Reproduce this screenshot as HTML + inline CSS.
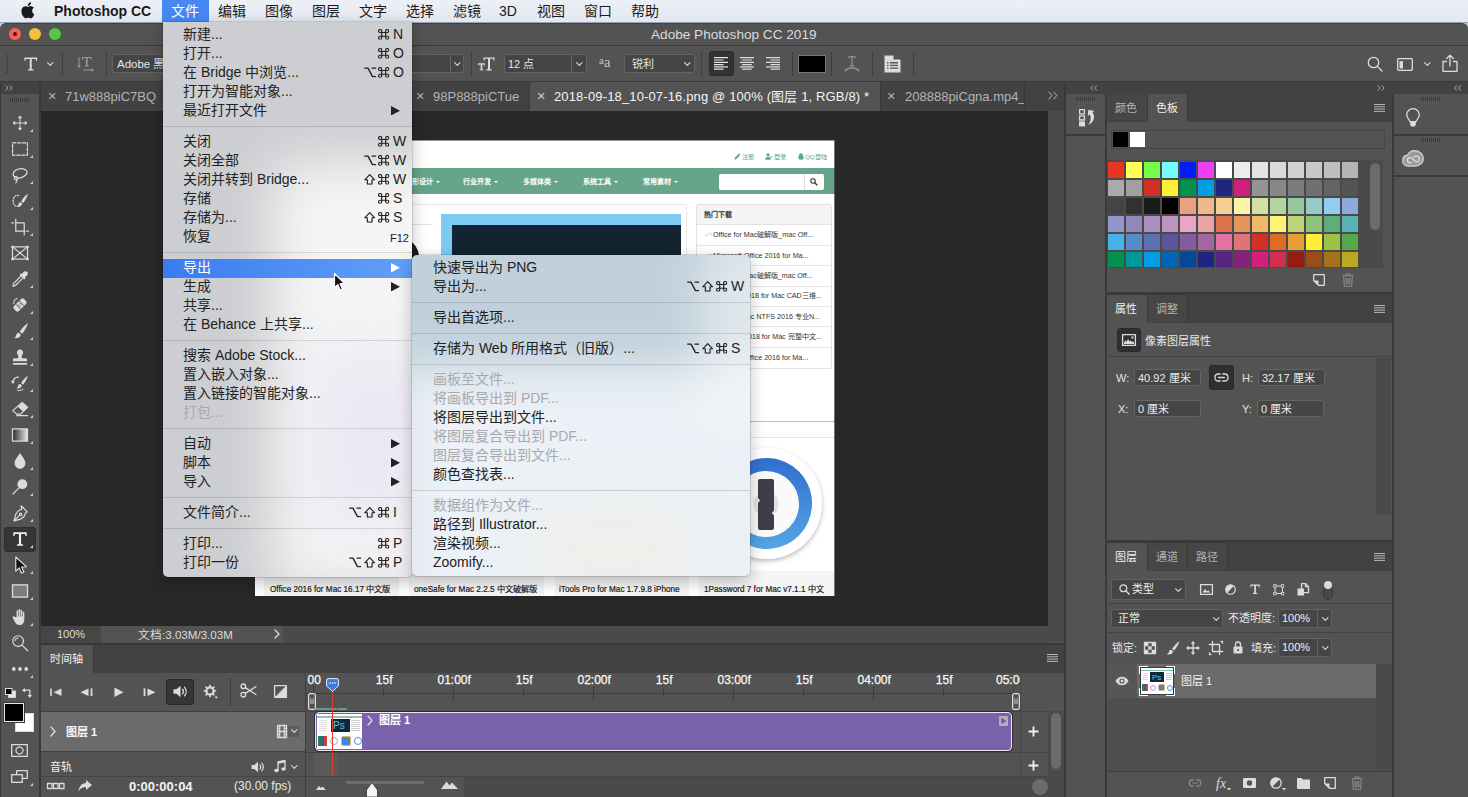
<!DOCTYPE html>
<html lang="zh-CN">
<head>
<meta charset="utf-8">
<title>Adobe Photoshop CC 2019</title>
<style>
*{box-sizing:border-box;margin:0;padding:0}
html,body{width:1468px;height:797px;overflow:hidden;background:#535353}
body{font-family:"Liberation Sans",sans-serif;font-size:12px;color:#ddd;position:relative}
.a{position:absolute}
.t{position:absolute;white-space:nowrap;line-height:1}
svg{position:absolute;overflow:visible}
.sep{position:absolute;width:1px;background:#3f3f3f}
.hl{position:absolute;height:1px;background:#3f3f3f}
.fld{position:absolute;background:#454545;border:1px solid #646464;border-radius:3px}
.dk{position:absolute;background:#333;border:1px solid #2a2a2a;border-radius:3px}
.pt{position:absolute;white-space:nowrap;line-height:1;font-size:11px;color:#b4b4b4}
.pt.on{color:#f0f0f0}
.ico{fill:none;stroke:#dcdcdc;stroke-width:1.3;stroke-linecap:round;stroke-linejoin:round}
.icf{fill:#dcdcdc;stroke:none}
/* mac menubar */
#menubar{left:0;top:0;width:1468px;height:22px;background:linear-gradient(#edf0f6,#e3e8f0);color:#1a1a1a}
#menubar .t{top:4px;font-size:14px}
/* mac menus */
.menu{position:absolute;color:#222;font-size:14px;box-shadow:0 5px 16px rgba(0,0,0,.26),0 0 0 .5px rgba(0,0,0,.22)}
.menu .mi{position:absolute;left:0;right:0;height:19px}
.menu .mi .t{top:2px;font-size:14px}
.menu .dis{color:#a9a9ad}
.menu .ms{position:absolute;left:0;right:0;height:1px;background:rgba(0,0,0,.13)}
.menu .sc{position:absolute;right:8px;top:0;height:19px}
</style>
</head>
<body>
<!-- shared icon symbols -->
<svg width="0" height="0" style="left:-10px;top:-10px">
 <defs>
  <symbol id="k-cmd" viewBox="0 0 12 12" preserveAspectRatio="none"><path d="M3.900 3.900V2.250a1.650 1.650 0 1 0-1.650 1.650H3.900zM8.100 3.900V2.250a1.650 1.650 0 1 1 1.650 1.650H8.100zM8.100 8.100V9.750a1.650 1.650 0 1 0 1.650-1.650H8.100zM3.900 8.100V9.750a1.650 1.650 0 1 1-1.650-1.650H3.900zM3.900 3.900H8.100V8.100H3.900z" fill="none" stroke="currentColor" stroke-width="1.250"/></symbol>
  <symbol id="k-opt" viewBox="0 0 12 12" preserveAspectRatio="none"><path d="M.2 1.300h3.700l4.300 9.400h3.600M7.300 1.300h4.500" fill="none" stroke="currentColor" stroke-width="1.350"/></symbol>
  <symbol id="k-shift" viewBox="0 0 12 12" preserveAspectRatio="none"><path d="M6 .8L.8 6.400h2.700v4.800h5V6.400h2.700z" fill="none" stroke="currentColor" stroke-width="1.250" stroke-linejoin="round"/></symbol>
  <symbol id="k-sub" viewBox="0 0 9 10" preserveAspectRatio="none"><path d="M0 0l9 5-9 5z" fill="currentColor"/></symbol>
 </defs>
</svg>
<!-- ================= macOS menu bar ================= -->
<div id="menubar" class="a">
  <svg style="left:21px;top:2px" width="14" height="17" viewBox="0 0 14 17"><path d="M11.600 9c0-2 1.700-3 1.800-3.100-1-1.400-2.500-1.600-3-1.600-1.300-.1-2.500.8-3.100.8-.700 0-1.700-.8-2.700-.7C3.200 4.400 1.900 5.200 1.200 6.400-.300 9 .800 12.800 2.200 14.900c.700 1 1.500 2.100 2.600 2.100 1.100 0 1.500-.700 2.700-.700 1.300 0 1.600.7 2.700.7 1.100 0 1.800-1 2.500-2 .8-1.200 1.100-2.300 1.100-2.400-.100 0-2.200-.8-2.200-3.600zM9.600 2.900c.6-.7 1-1.700.9-2.700-.9 0-1.900.6-2.500 1.300-.6.600-1.100 1.600-.9 2.600.9.100 1.900-.5 2.500-1.200z" fill="#1a1a1a" transform="scale(.96)"/></svg>
  <div class="t" style="left:54px;font-weight:bold">Photoshop CC</div>
  <div class="a" style="left:162px;top:0;width:47px;height:22px;background:#4689f2"></div>
  <div class="t" style="left:171px;color:#fff">文件</div>
  <div class="t" style="left:218px">编辑</div>
  <div class="t" style="left:265px">图像</div>
  <div class="t" style="left:312px">图层</div>
  <div class="t" style="left:359px">文字</div>
  <div class="t" style="left:406px">选择</div>
  <div class="t" style="left:453px">滤镜</div>
  <div class="t" style="left:499px">3D</div>
  <div class="t" style="left:537px">视图</div>
  <div class="t" style="left:584px">窗口</div>
  <div class="t" style="left:631px">帮助</div>
</div>
<!-- ================= Photoshop window chrome ================= -->
<div class="a" style="left:0;top:22px;width:1468px;height:9px;background:linear-gradient(#98a1b3 0 1px,#c5cddb 1px)"></div>
<div id="titlebar" class="a" style="left:0;top:23px;width:1468px;height:23px;background:#535353;border-radius:6px 6px 0 0;border-top:1px solid #3e4043"></div>
<div class="a" style="left:9px;top:28px;width:12px;height:12px;border-radius:50%;background:#f7615b"></div>
<div class="a" style="left:13px;top:32px;width:4px;height:4px;border-radius:50%;background:#4d0a08"></div>
<div class="a" style="left:29px;top:28px;width:12px;height:12px;border-radius:50%;background:#f8be3f"></div>
<div class="a" style="left:49px;top:28px;width:12px;height:12px;border-radius:50%;background:#54c748"></div>
<div class="t" style="left:651px;top:28px;font-size:13.600px;color:#dcdcdc">Adobe Photoshop CC 2019</div>
<div class="hl" style="left:0;top:45px;width:1468px;background:#3a3a3a"></div>

<!-- options bar (y 46-81) -->
<div id="optbar" class="a" style="left:0;top:46px;width:1468px;height:35px;background:#535353"></div>
<div class="a" style="left:6px;top:54px;width:2px;height:20px;background:repeating-linear-gradient(#3c3c3c 0 1px,transparent 1px 2px)"></div>
<!-- T tool icon -->
<svg style="left:23.500px;top:56.500px" width="13.500" height="14" viewBox="0 0 15 15" preserveAspectRatio="none"><path d="M.5.5h14v3.600h-1.200l-.4-2H8.600v10.800l2 .4v1.200H4.400v-1.200l2-.4V2.100H2.100l-.4 2H.5z" class="icf"/></svg>
<svg style="left:46.7px;top:62.4px" width="6.600" height="4.200" viewBox="0 0 8 5"><path d="M.7.700L4 4l3.300-3.300" class="ico"/></svg>
<div class="sep" style="left:62px;top:52px;height:24px"></div>
<!-- text orientation -->
<svg style="left:77px;top:56px" width="18" height="17" viewBox="0 0 18 17"><g fill="#9a9a9a"><path d="M5 1h9.500v2.600h-.9l-.3-1.500h-2.700v7.300l1.300.3v.9H7.600v-.9l1.300-.3V2.100H6.200l-.3 1.500H5z"/><path d="M1.500 1h1v8.500h1.300L2 12 .200 9.500h1.300zM6 13.500h8.500v-1.300L17 14l-2.500 1.800v-1.300H6z"/></g></svg>
<div class="sep" style="left:106px;top:52px;height:24px"></div>
<!-- font family field -->
<div class="fld" style="left:112px;top:54px;width:176px;height:19px"></div>
<div class="t" style="left:117px;top:59px;font-size:11.500px;color:#e6e6e6">Adobe 黑体 Std</div>
<div class="fld" style="left:294px;top:54px;width:170px;height:19px"></div>
<div class="a" style="left:450px;top:55px;width:1px;height:17px;background:#686868"></div>
<svg style="left:453.7px;top:62.4px" width="6.600" height="4.200" viewBox="0 0 8 5"><path d="M.7.700L4 4l3.300-3.300" class="ico"/></svg>
<div class="sep" style="left:471px;top:52px;height:24px"></div>
<!-- font size -->
<svg style="left:478px;top:57px" width="17" height="14" viewBox="0 0 17 14"><path d="M5.500.5H16.500v3h-1l-.3-1.700H12v10.300l1.700.3v1H8.300v-1l1.700-.3V1.800H6.800l-.3 1.700h-1zM.3 6.300h6.400v2.200h-.8l-.2-1.100H4.300v4.800l1 .2v.9H1.700v-.9l1-.2V7.400H1.300l-.2 1.100H.3z" class="icf"/></svg>
<div class="fld" style="left:504px;top:54px;width:83px;height:19px"></div>
<div class="t" style="left:508px;top:59px;font-size:11px;color:#e6e6e6">12 点</div>
<div class="a" style="left:571px;top:55px;width:1px;height:17px;background:#686868"></div>
<svg style="left:575.7px;top:62.4px" width="6.600" height="4.200" viewBox="0 0 8 5"><path d="M.7.700L4 4l3.300-3.300" class="ico"/></svg>
<div class="t" style="left:599px;top:55px;font-family:'Liberation Serif',serif;font-size:14.500px;color:#c4c4c4"><span style="font-size:11px;position:relative;top:-3px">a</span>a</div>
<div class="fld" style="left:624px;top:54px;width:71px;height:19px"></div>
<div class="t" style="left:632px;top:59px;font-size:11px;color:#e6e6e6">锐利</div>
<svg style="left:683.7px;top:62.4px" width="6.600" height="4.200" viewBox="0 0 8 5"><path d="M.7.700L4 4l3.300-3.300" class="ico"/></svg>
<div class="sep" style="left:701px;top:52px;height:24px"></div>
<!-- alignment -->
<div class="dk" style="left:709px;top:51px;width:25px;height:25px"></div>
<svg style="left:714px;top:57px" width="14" height="13" viewBox="0 0 14 13"><path d="M0 .7h14M0 3h9.500M0 5.300h14M0 7.600h9.500M0 9.900h14M0 12.200h9.500" stroke="#e4e4e4" stroke-width="1.2"/></svg>
<svg style="left:740px;top:57px" width="14" height="13" viewBox="0 0 14 13"><path d="M0 .7h14M2.200 3h9.600M0 5.300h14M2.200 7.600h9.600M0 9.900h14M2.200 12.200h9.600" stroke="#dcdcdc" stroke-width="1.2"/></svg>
<svg style="left:766px;top:57px" width="14" height="13" viewBox="0 0 14 13"><path d="M0 .7h14M4.500 3H14M0 5.300h14M4.500 7.600H14M0 9.900h14M4.500 12.200H14" stroke="#dcdcdc" stroke-width="1.2"/></svg>
<div class="sep" style="left:792px;top:52px;height:24px"></div>
<div class="a" style="left:798px;top:55px;width:28px;height:18px;background:#000;border:1px solid #777"></div>
<div class="sep" style="left:831px;top:52px;height:24px"></div>
<svg style="left:844px;top:55px" width="16" height="18" viewBox="0 0 16 18"><g fill="none" stroke="#9a9a9a" stroke-width="1.1"><path d="M4 2.500c2.500-1.300 5.500-1.300 8 0M8 2v9M5.600 11h4.800"/><path d="M.8 16c4-4.200 10.400-4.200 14.400 0"/></g></svg>
<div class="sep" style="left:872px;top:52px;height:24px"></div>
<div class="sep" style="left:913px;top:52px;height:24px"></div>
<svg style="left:884px;top:55px" width="17" height="18" viewBox="0 0 17 18"><path d="M.5.500h9l0 4h7v13H.5z" fill="#dcdcdc"/><path d="M3 7.700h1.500M6 7.700h8M3 10.400h1.500M6 10.400h8M3 13.100h1.500M6 13.100h8" stroke="#535353" stroke-width="1.4"/></svg>
<!-- right side of options bar -->
<svg style="left:1367px;top:56px" width="16" height="16" viewBox="0 0 16 16"><circle cx="6.500" cy="6.500" r="5.200" class="ico" stroke-width="1.500"/><path d="M10.400 10.400l4.600 4.600" class="ico" stroke-width="1.800"/></svg>
<svg style="left:1397px;top:58px" width="16" height="13" viewBox="0 0 16 13"><rect x=".7" y=".7" width="14.600" height="11.600" rx="1" class="ico" stroke-width="1.400"/><rect x="2.500" y="3.200" width="3.500" height="7.300" class="icf"/></svg>
<svg style="left:1423.7px;top:62.4px" width="6.600" height="4.200" viewBox="0 0 8 5"><path d="M.7.700L4 4l3.300-3.300" class="ico"/></svg>
<svg style="left:1442px;top:54px" width="16" height="18" viewBox="0 0 16 18"><path d="M4.500 7.500H1v9.800h14V7.500h-3.500M8 12V1.500M4.600 4.500L8 1.100l3.400 3.400" class="ico" stroke-width="1.600" stroke-linecap="butt" stroke-linejoin="miter"/></svg>
<div class="hl" style="left:0;top:81px;width:1468px;background:#3a3a3a"></div>

<!-- document tab bar (y 82-110) -->
<div class="a" style="left:0;top:82px;width:1064px;height:29px;background:#424242"></div>
<div class="a" style="left:0;top:94px;width:40px;height:703px;background:#535353"></div>
<div class="a" style="left:0;top:82px;width:1px;height:715px;background:#3a3a3a"></div>
<div class="sep" style="left:39px;top:82px;height:715px;width:2px;background:#3a3a3a"></div>
<svg style="left:5px;top:85px" width="8" height="6" viewBox="0 0 8 6"><path d="M.5.500l2.600 2.500L.5 5.500M4.500 .5l2.600 2.500-2.600 2.500" fill="none" stroke="#bcbcbc" stroke-width=".85"/></svg>
<div class="a" style="left:10px;top:98px;width:20px;height:4px;background:repeating-linear-gradient(90deg,#3c3c3c 0 1px,transparent 1px 2px)"></div>
<!-- tabs -->
<div class="t" style="left:48px;top:89px;font-size:14.500px;color:#b8b8b8">×</div>
<div class="t" style="left:65px;top:90px;font-size:13px;color:#b4b4b4">71w888piC7BQ</div>
<div class="t" style="left:416px;top:89px;font-size:14.500px;color:#b8b8b8">×</div>
<div class="t" style="left:433px;top:90px;font-size:13px;color:#b4b4b4">98P888piCTue</div>
<div class="sep" style="left:529px;top:82px;height:28px;background:#383838"></div>
<div class="a" style="left:530px;top:82px;width:350px;height:29px;background:#535353"></div>
<div class="sep" style="left:880px;top:82px;height:28px;background:#383838"></div>
<div class="t" style="left:537px;top:89px;font-size:14.500px;color:#d0d0d0">×</div>
<div class="t" style="left:554px;top:90px;font-size:13px;letter-spacing:.140px;color:#f4f4f4">2018-09-18_10-07-16.png @ 100% (图层 1, RGB/8) *</div>
<div class="t" style="left:887px;top:89px;font-size:14.500px;color:#b8b8b8">×</div>
<div class="t" style="left:905px;top:90px;font-size:13px;color:#b4b4b4;width:119px;height:18px;overflow:hidden">208888piCgna.mp4_</div>
<div class="sep" style="left:1024px;top:82px;height:28px;background:#383838"></div>
<svg style="left:1048px;top:91px" width="10" height="9" viewBox="0 0 10 9"><path d="M.7.700l3.300 3.800L.7 8.300M5.500 .7l3.300 3.800-3.300 3.800" fill="none" stroke="#c4c4c4" stroke-width=".9"/></svg>
<!-- ================= left toolbar ================= -->
<svg style="left:10px;top:113px" width="20" height="20" viewBox="0 0 20 20"><g transform="translate(10 10) scale(0.75) translate(-10 -10)"><path d="M10 1.500v17M1.500 10h17" class="ico" stroke-width="1.5" stroke-linecap="butt"/><path d="M10 0l3 3.600H7zM10 20l3-3.600H7zM0 10l3.600-3v6zM20 10l-3.600-3v6z" class="icf"/></g></svg>
<svg style="left:30px;top:129px" width="3" height="3" viewBox="0 0 3 3"><path d="M3 0v3H0z" fill="#cfcfcf"/></svg>
<svg style="left:10px;top:139px" width="20" height="20" viewBox="0 0 20 20"><g transform="translate(10 10) scale(0.95) translate(-10 -10)"><rect x="2.200" y="3.500" width="15.600" height="13" class="ico" stroke-width="1.500" stroke-dasharray="3.400 1.800" stroke-linecap="butt"/></g></svg>
<svg style="left:30px;top:155px" width="3" height="3" viewBox="0 0 3 3"><path d="M3 0v3H0z" fill="#cfcfcf"/></svg>
<svg style="left:10px;top:165px" width="20" height="20" viewBox="0 0 20 20"><g transform="translate(10 10) scale(0.94) translate(-10 -10)"><path d="M5.300 12.600C2.800 11.600 2 9.300 3.400 7 5 4.300 9.600 2.600 13.600 3.400c3.600.7 4.800 3.400 3 6-1.900 2.800-6.400 4.400-10.300 3.600" class="ico" stroke-width="1.400"/><circle cx="5.700" cy="13.400" r="1.700" class="ico" stroke-width="1.200"/><path d="M6.300 15c.7 1 .5 2.300-.7 3.400" class="ico" stroke-width="1.200"/></g></svg>
<svg style="left:30px;top:181px" width="3" height="3" viewBox="0 0 3 3"><path d="M3 0v3H0z" fill="#cfcfcf"/></svg>
<svg style="left:10px;top:191px" width="20" height="20" viewBox="0 0 20 20"><g transform="translate(10 10) scale(0.94) translate(-10 -10)"><path d="M8.500 4.300c-3.200-.9-5.800 1.600-5.800 5.700 0 4 2.600 6.400 5.600 5.500" class="ico" stroke-width="1.400" stroke-dasharray="1.200 1.700"/><path d="M18.300 2.400c-2.600 1.800-5.300 4.800-7 8l2.300 1.700c2.200-3 4-6.200 4.700-9.700zM10.600 11.400c-1.700.2-2.200 1.400-2.300 2.400-.1 1-.7 1.600-1.400 1.800 2.400.9 5.100-.2 5.600-2.700z" class="icf"/></g></svg>
<svg style="left:30px;top:207px" width="3" height="3" viewBox="0 0 3 3"><path d="M3 0v3H0z" fill="#cfcfcf"/></svg>
<svg style="left:10px;top:217px" width="20" height="20" viewBox="0 0 20 20"><g transform="translate(10 10) scale(0.94) translate(-10 -10)"><path d="M5.500 1.500v13H15M17 14.500h2M1 5.500h2M5 5.500h9.500V18.500" class="ico" stroke-width="2" stroke-linecap="butt" stroke-linejoin="miter"/></g></svg>
<svg style="left:30px;top:233px" width="3" height="3" viewBox="0 0 3 3"><path d="M3 0v3H0z" fill="#cfcfcf"/></svg>
<svg style="left:10px;top:243px" width="20" height="20" viewBox="0 0 20 20"><g transform="translate(10 10) scale(0.94) translate(-10 -10)"><rect x="2" y="3.500" width="16" height="13" class="ico" stroke-width="1.500"/><path d="M2 3.500l16 13M18 3.500l-16 13" class="ico" stroke-width="1.200"/><path d="M.8 2.300h2.400v2.400H.8zM16.800 2.300h2.400v2.400h-2.400zM.8 15.300h2.400v2.400H.8zM16.800 15.300h2.400v2.400h-2.400z" class="icf"/></g></svg>
<svg style="left:10px;top:269px" width="20" height="20" viewBox="0 0 20 20"><g transform="translate(10 10) scale(0.94) translate(-10 -10)"><path d="M17.600 2.400c-1.100-1.100-2.800-1-3.800.1l-2 2.200-.8-.8-1.500 1.500 5.100 5.100 1.500-1.500-.8-.8 2.200-2c1.100-1 1.200-2.700.1-3.800z" class="icf"/><path d="M10.600 7.300L3.300 14.600l-.9 3 3-.9 7.300-7.300" class="ico" stroke-width="1.400"/></g></svg>
<svg style="left:30px;top:285px" width="3" height="3" viewBox="0 0 3 3"><path d="M3 0v3H0z" fill="#cfcfcf"/></svg>
<svg style="left:10px;top:295px" width="20" height="20" viewBox="0 0 20 20"><g transform="translate(10 10) scale(0.94) translate(-10 -10)"><g transform="rotate(-45 10 10)"><rect x="2.500" y="6.300" width="15" height="7.400" rx="2.200" class="icf"/><path d="M7.400 6.300v7.400M12.600 6.300v7.400" stroke="#535353" stroke-width="1"/><circle cx="9" cy="9" r=".6" fill="#535353"/><circle cx="11" cy="9" r=".6" fill="#535353"/><circle cx="9" cy="11" r=".6" fill="#535353"/><circle cx="11" cy="11" r=".6" fill="#535353"/></g><path d="M3.500 8.500C3 6 4.500 3.500 7.500 3" class="ico" stroke-width="1.200" stroke-dasharray="1.200 1.500"/></g></svg>
<svg style="left:30px;top:311px" width="3" height="3" viewBox="0 0 3 3"><path d="M3 0v3H0z" fill="#cfcfcf"/></svg>
<svg style="left:10px;top:321px" width="20" height="20" viewBox="0 0 20 20"><g transform="translate(10 10) scale(0.94) translate(-10 -10)"><path d="M18.500 1.500c-3.200 2-6.600 5.600-8.800 9.400l2.600 2c2.700-3.500 5.200-7.300 6.200-11.400zM8.700 11.900c-2 .2-2.700 1.600-2.800 2.800-.1 1.300-1 2.200-2.400 2.600 3 1.200 6.800-.2 7.400-3.400z" class="icf"/></g></svg>
<svg style="left:30px;top:337px" width="3" height="3" viewBox="0 0 3 3"><path d="M3 0v3H0z" fill="#cfcfcf"/></svg>
<svg style="left:10px;top:347px" width="20" height="20" viewBox="0 0 20 20"><g transform="translate(10 10) scale(0.94) translate(-10 -10)"><path d="M10 2c-2 0-3.300 1.500-3.300 3.300 0 1.500 1 2.300 1.400 3.500.3.900.2 1.900-.3 2.400H3.900c-.9 0-1.400.6-1.400 1.400v2h15v-2c0-.8-.5-1.400-1.400-1.400h-3.900c-.5-.5-.6-1.500-.3-2.400.4-1.200 1.400-2 1.400-3.500C13.300 3.500 12 2 10 2zM2.500 16.300h15v1.900h-15z" class="icf"/></g></svg>
<svg style="left:30px;top:363px" width="3" height="3" viewBox="0 0 3 3"><path d="M3 0v3H0z" fill="#cfcfcf"/></svg>
<svg style="left:10px;top:373px" width="20" height="20" viewBox="0 0 20 20"><g transform="translate(10 10) scale(0.94) translate(-10 -10)"><path d="M18.300 2.300c-2.700 1.700-5.400 4.700-7.200 7.800l2.300 1.700c2.200-2.900 4.100-6 4.900-9.500zM10.200 11c-1.700.2-2.300 1.400-2.400 2.400-.1 1.100-.8 1.800-1.800 2.100 2.500 1 5.500-.2 6-2.900z" class="icf"/><path d="M2.300 9.500C2.500 6 5 3.600 8.300 3.800" class="ico" stroke-width="1.300"/><path d="M.3 7.800l4.200-.3-1.900 3.600z" class="icf"/><path d="M13 16.500c-1.500 1.300-3.400 1.800-5.300 1.400" class="ico" stroke-width="1.100" stroke-dasharray="1 1.400"/></g></svg>
<svg style="left:30px;top:389px" width="3" height="3" viewBox="0 0 3 3"><path d="M3 0v3H0z" fill="#cfcfcf"/></svg>
<svg style="left:10px;top:399px" width="20" height="20" viewBox="0 0 20 20"><g transform="translate(10 10) scale(0.94) translate(-10 -10)"><path d="M12.300 3l5.700 5.200-7.300 7.300H6.500L2.300 11.700z" class="ico" stroke-width="1.300"/><path d="M12.300 3l5.700 5.200-4.600 4.600-5.700-5.200z" class="icf"/><path d="M6.500 17h11.500" class="ico" stroke-width="1.300"/></g></svg>
<svg style="left:30px;top:415px" width="3" height="3" viewBox="0 0 3 3"><path d="M3 0v3H0z" fill="#cfcfcf"/></svg>
<svg style="left:10px;top:425px" width="20" height="20" viewBox="0 0 20 20"><g transform="translate(10 10) scale(0.94) translate(-10 -10)"><defs><linearGradient id="tg" x1="0" x2="1"><stop offset="0" stop-color="#2a2a2a"/><stop offset="1" stop-color="#e8e8e8"/></linearGradient></defs><rect x="2" y="3.500" width="16" height="13" fill="url(#tg)" stroke="#dcdcdc" stroke-width="1.300"/></g></svg>
<svg style="left:30px;top:441px" width="3" height="3" viewBox="0 0 3 3"><path d="M3 0v3H0z" fill="#cfcfcf"/></svg>
<svg style="left:10px;top:451px" width="20" height="20" viewBox="0 0 20 20"><g transform="translate(10 10) scale(0.94) translate(-10 -10)"><path d="M10 1.500c2.200 3.700 5.700 7 5.700 10.800 0 3.300-2.500 5.900-5.700 5.900s-5.700-2.600-5.700-5.900C4.300 8.500 7.800 5.200 10 1.500z" class="icf"/></g></svg>
<svg style="left:30px;top:467px" width="3" height="3" viewBox="0 0 3 3"><path d="M3 0v3H0z" fill="#cfcfcf"/></svg>
<svg style="left:10px;top:477px" width="20" height="20" viewBox="0 0 20 20"><g transform="translate(10 10) scale(0.94) translate(-10 -10)"><circle cx="12.500" cy="7" r="5.200" class="icf"/><path d="M9 11l-6.500 6.500" class="ico" stroke-width="2"/></g></svg>
<svg style="left:30px;top:493px" width="3" height="3" viewBox="0 0 3 3"><path d="M3 0v3H0z" fill="#cfcfcf"/></svg>
<svg style="left:10px;top:503px" width="20" height="20" viewBox="0 0 20 20"><g transform="translate(10 10) scale(0.94) translate(-10 -10)"><path d="M11.200 2.300l6.500 6.500-2 1.400c-.5 3-2 5-5.200 6.300l-6.800 1.800 1.800-6.800c1.300-3.200 3.300-4.700 6.300-5.200z" class="ico" stroke-width="1.300"/><path d="M4 18l5.800-5.800" class="ico" stroke-width="1.100"/><circle cx="10.600" cy="11.400" r="1.300" class="ico" stroke-width="1.100"/></g></svg>
<svg style="left:30px;top:519px" width="3" height="3" viewBox="0 0 3 3"><path d="M3 0v3H0z" fill="#cfcfcf"/></svg>
<div class="a" style="left:4px;top:527px;width:32px;height:25px;background:#363636;border:1px solid #2e2e2e;border-radius:3px"></div>
<svg style="left:10px;top:529px" width="20" height="20" viewBox="0 0 20 20"><g transform="translate(10 10) scale(0.84) translate(-10 -10)"><path d="M2 2h16v4.400h-1.400l-.5-2.500h-4.800V16l2.400.5V18H6.300v-1.500l2.400-.5V3.900H3.900l-.5 2.500H2z" fill="#f0f0f0"/></g></svg>
<svg style="left:30px;top:545px" width="3" height="3" viewBox="0 0 3 3"><path d="M3 0v3H0z" fill="#cfcfcf"/></svg>
<svg style="left:10px;top:555px" width="20" height="20" viewBox="0 0 20 20"><g transform="translate(10 10) scale(0.94) translate(-10 -10)"><path d="M5.500 1.500v15l3.700-3.400 2.400 5.400 2.500-1.100-2.400-5.300 5-.3z" fill="#111" stroke="#e4e4e4" stroke-width="1.200" stroke-linejoin="round"/></g></svg>
<svg style="left:30px;top:571px" width="3" height="3" viewBox="0 0 3 3"><path d="M3 0v3H0z" fill="#cfcfcf"/></svg>
<svg style="left:10px;top:581px" width="20" height="20" viewBox="0 0 20 20"><g transform="translate(10 10) scale(0.94) translate(-10 -10)"><rect x="2" y="3.500" width="16" height="13" fill="#7c7c7c" stroke="#dcdcdc" stroke-width="1.400"/></g></svg>
<svg style="left:30px;top:597px" width="3" height="3" viewBox="0 0 3 3"><path d="M3 0v3H0z" fill="#cfcfcf"/></svg>
<svg style="left:10px;top:607px" width="20" height="20" viewBox="0 0 20 20"><g transform="translate(10 10) scale(0.94) translate(-10 -10)"><path d="M6.300 10.500V4.200c0-1.600 2-1.600 2 0V3c0-1.700 2.200-1.700 2.200 0v1c0-1.600 2.100-1.600 2.100 0v1.600c0-1.500 2-1.500 2 0V12c0 3.700-1.700 6.500-5 6.500-3 0-4.200-1.400-5.600-4.300L2.300 10.700c-.6-1.400 1-2.300 1.900-1z" class="icf"/><path d="M8.300 4v5.500M10.500 4v5.500M12.600 5v4.500" stroke="#535353" stroke-width=".7"/></g></svg>
<svg style="left:30px;top:623px" width="3" height="3" viewBox="0 0 3 3"><path d="M3 0v3H0z" fill="#cfcfcf"/></svg>
<svg style="left:10px;top:633px" width="20" height="20" viewBox="0 0 20 20"><g transform="translate(10 10) scale(0.94) translate(-10 -10)"><circle cx="8" cy="8" r="5.700" class="ico" stroke-width="1.500"/><path d="M12.200 12.200l6 6" class="ico" stroke-width="2.200"/><path d="M4.800 7.200c.4-1.600 1.600-2.600 3-2.800" class="ico" stroke-width=".9"/></g></svg>
<svg style="left:10px;top:659px" width="20" height="20" viewBox="0 0 20 20"><g transform="translate(10 10) scale(0.94) translate(-10 -10)"><circle cx="3.400" cy="10" r="2" class="icf"/><circle cx="10" cy="10" r="2" class="icf"/><circle cx="16.600" cy="10" r="2" class="icf"/></g></svg>
<svg style="left:30px;top:675px" width="3" height="3" viewBox="0 0 3 3"><path d="M3 0v3H0z" fill="#cfcfcf"/></svg>
<svg style="left:5px;top:688px" width="11" height="10" viewBox="0 0 11 10"><rect x="3.500" y="3" width="7" height="6.500" fill="#e8e8e8" stroke="#cfcfcf"/><rect x=".5" y=".5" width="6.500" height="6" fill="#000" stroke="#dcdcdc"/></svg>
<svg style="left:22px;top:688px" width="10" height="10" viewBox="0 0 10 10"><path d="M2.500 2.200H7.800V7.500" class="ico" stroke-width="1.300"/><path d="M0 2.200L3 0v4.400zM7.800 10L5.600 7h4.400z" class="icf"/></svg>
<div class="a" style="left:15px;top:713px;width:19px;height:19px;background:#fff;border:1px solid #dcdcdc"></div>
<div class="a" style="left:4px;top:703px;width:20px;height:19px;background:#000;border:1px solid #e6e6e6;box-shadow:0 0 0 1px #3a3a3a"></div>
<svg style="left:11px;top:744px" width="17" height="13" viewBox="0 0 17 13"><rect x=".7" y=".7" width="15.600" height="11.600" class="ico" stroke-width="1.300" stroke-linejoin="miter"/><circle cx="8.500" cy="6.500" r="3.500" class="ico" stroke-width="1.100" stroke-dasharray="1 1.200"/></svg>
<svg style="left:11px;top:770px" width="17" height="13" viewBox="0 0 17 13"><rect x="5.700" y=".7" width="10.600" height="7.600" class="ico" stroke-width="1.300" stroke-linejoin="miter"/><rect x=".7" y="4.700" width="10.600" height="7.600" fill="#535353" stroke="#dcdcdc" stroke-width="1.300"/></svg>
<svg style="left:30px;top:783px" width="3" height="3" viewBox="0 0 3 3"><path d="M3 0v3H0z" fill="#cfcfcf"/></svg>
<!-- ================= canvas area ================= -->
<div class="a" style="left:41px;top:111px;width:1007px;height:515px;background:#282828"></div>
<div class="a" style="left:1048px;top:111px;width:16px;height:531px;background:#4a4a4a"></div>
<div class="a" style="left:1064px;top:82px;width:2px;height:715px;background:#383838"></div>
<!-- the open document: a web page screenshot -->
<div id="doc" class="a" style="left:255px;top:140px;width:580px;height:456px;background:#fff;overflow:hidden;color:#333;font-size:7px">
  <!-- top links -->
  <svg style="left:479px;top:13px" width="7" height="7" viewBox="0 0 7 7"><path d="M.3 6.700l.5-1.900L5 .6l1.400 1.400-4.200 4.200z" fill="#5fa88a"/></svg>
  <div class="t" style="left:487px;top:13.500px;color:#5fa88a;font-size:6.200px">注册</div>
  <svg style="left:510px;top:13px" width="7" height="7" viewBox="0 0 7 7"><circle cx="3" cy="1.800" r="1.600" fill="#5fa88a"/><path d="M.2 6.800c0-2 1.200-3 2.800-3s2.800 1 2.800 3zM5 3.500h2v1H5z" fill="#5fa88a"/></svg>
  <div class="t" style="left:519px;top:13.500px;color:#5fa88a;font-size:6.200px">登录</div>
  <svg style="left:542.500px;top:13px" width="6" height="7" viewBox="0 0 6 7"><path d="M3 .2c1.300 0 2 1 2 2.300 0 .6.900 1.500.9 2.600 0 .5-.3.500-.6.100-.1.500-.4.800-.7 1 .3.200.3.600-.3.600H1.700c-.6 0-.6-.4-.3-.6-.3-.2-.6-.5-.7-1-.3.400-.6.400-.6-.1 0-1.100.9-2 .9-2.600C1 1.200 1.700.2 3 .2z" fill="#5fa88a"/></svg>
  <div class="t" style="left:550px;top:13.500px;color:#5fa88a;font-size:6.200px">QQ登陆</div>
  <!-- nav bar -->
  <div class="a" style="left:0;top:28px;width:580px;height:26px;background:#67a58a"></div>
  <div class="t" style="left:150px;top:38px;color:#fff;font-weight:bold;font-size:7px">图形设计<span style="display:inline-block;width:0;height:0;border-left:2px solid transparent;border-right:2px solid transparent;border-top:2.500px solid #fff;vertical-align:middle;margin-left:3px"></span></div>
  <div class="t" style="left:208px;top:38px;color:#fff;font-weight:bold;font-size:7px">行业开发<span style="display:inline-block;width:0;height:0;border-left:2px solid transparent;border-right:2px solid transparent;border-top:2.500px solid #fff;vertical-align:middle;margin-left:3px"></span></div>
  <div class="t" style="left:268px;top:38px;color:#fff;font-weight:bold;font-size:7px">多媒体类<span style="display:inline-block;width:0;height:0;border-left:2px solid transparent;border-right:2px solid transparent;border-top:2.500px solid #fff;vertical-align:middle;margin-left:3px"></span></div>
  <div class="t" style="left:328px;top:38px;color:#fff;font-weight:bold;font-size:7px">系统工具<span style="display:inline-block;width:0;height:0;border-left:2px solid transparent;border-right:2px solid transparent;border-top:2.500px solid #fff;vertical-align:middle;margin-left:3px"></span></div>
  <div class="t" style="left:388px;top:38px;color:#fff;font-weight:bold;font-size:7px">常用素材<span style="display:inline-block;width:0;height:0;border-left:2px solid transparent;border-right:2px solid transparent;border-top:2.500px solid #fff;vertical-align:middle;margin-left:3px"></span></div>
  <div class="a" style="left:464px;top:34px;width:105px;height:16px;background:#fff;border-radius:2px"></div>
  <div class="a" style="left:549px;top:34px;width:1px;height:16px;background:#ddd"></div>
  <svg style="left:555px;top:38px" width="8" height="8" viewBox="0 0 8 8"><circle cx="3" cy="3" r="2.200" fill="none" stroke="#333" stroke-width="1.100"/><path d="M4.700 4.700L7.300 7.300" stroke="#333" stroke-width="1.400"/></svg>
  <!-- main content card -->
  <div class="a" style="left:120px;top:64px;width:312px;height:330px;border:1px solid #e7e7e7;border-radius:2px"></div>
  <div class="a" style="left:140px;top:84px;width:38px;height:1px;background:#e2e2e2"></div>
  <div class="a" style="left:126px;top:98px;width:38px;height:38px;border-radius:50%;background:#1d1d1f"></div>
  <div class="a" style="left:186px;top:74px;width:240px;height:150px;background:#7ccbf3"></div>
  <div class="a" style="left:197px;top:85px;width:229px;height:139px;background:#122430"></div>
  <!-- sidebar -->
  <div class="a" style="left:441px;top:64px;width:136px;height:165px;border:1px solid #e2e2e2;border-radius:2px;background:#fff"></div>
  <div class="a" style="left:442px;top:65px;width:134px;height:20px;background:#f5f5f5;border-bottom:1px solid #e2e2e2"></div>
  <div class="t" style="left:449px;top:71px;font-weight:bold;font-size:7px;color:#333">热门下载</div>
  <div class="a" style="left:442px;top:105px;width:134px;height:1px;background:#e6e6e6"></div>
  <div class="a" style="left:442px;top:125px;width:134px;height:1px;background:#e6e6e6"></div>
  <div class="a" style="left:442px;top:146px;width:134px;height:1px;background:#e6e6e6"></div>
  <div class="a" style="left:442px;top:166px;width:134px;height:1px;background:#e6e6e6"></div>
  <div class="a" style="left:442px;top:186px;width:134px;height:1px;background:#e6e6e6"></div>
  <div class="a" style="left:442px;top:207px;width:134px;height:1px;background:#e6e6e6"></div>
  <svg style="left:450px;top:91px" width="7" height="7" viewBox="0 0 7 7"><path d="M3 4L4.800 2.200a1.100 1.100 0 0 1 1.600 1.600L5.500 4.700M4 3L2.200 4.800a1.100 1.100 0 0 1-1.600-1.600L1.500 2.300" fill="none" stroke="#c4c4c4" stroke-width=".8"/></svg>
  <div class="t" style="left:458px;top:92px;font-size:7.150px;color:#333">Office for Mac破解版_mac Off...</div>
  <svg style="left:450px;top:112px" width="7" height="7" viewBox="0 0 7 7"><path d="M3 4L4.800 2.200a1.100 1.100 0 0 1 1.600 1.600L5.500 4.700M4 3L2.200 4.800a1.100 1.100 0 0 1-1.600-1.600L1.500 2.300" fill="none" stroke="#c4c4c4" stroke-width=".8"/></svg>
  <div class="t" style="left:458px;top:113px;font-size:7.150px;color:#333">Microsoft Office 2016 for Ma...</div>
  <div class="t" style="right:22.4px;top:133px;font-size:7.150px;color:#333">Office for Mac破解版_mac Off...</div>
  <div class="t" style="right:13.3px;top:153px;font-size:7.150px;color:#333">AutoCAD 2018 for Mac CAD三维...</div>
  <div class="t" style="right:15px;top:174px;font-size:7.150px;color:#333">Tuxera for Mac NTFS 2016 专业N...</div>
  <div class="t" style="right:13.4px;top:194px;font-size:7.150px;color:#333">Adobe CC 2018 for Mac 完整中文...</div>
  <div class="t" style="right:26.8px;top:215px;font-size:7.150px;color:#333">Microsoft Office 2016 for Ma...</div>
  <!-- lower section -->
  <div class="a" style="left:10px;top:281px;width:570px;height:1px;background:#9fccb9"></div>
  <div class="a" style="left:10px;top:297px;width:570px;height:1px;background:#e4e4e4"></div>
  <!-- 1Password icon -->
  <div class="a" style="left:456px;top:308px;width:111px;height:111px;border-radius:50%;background:radial-gradient(circle at 50% 45%,#fff 0 85%,#e9e9e9 100%);box-shadow:0 2px 5px rgba(0,0,0,.28)"></div>
  <div class="a" style="left:466px;top:318px;width:91px;height:91px;border-radius:50%;background:linear-gradient(#2f6fd0,#55a6e6)"></div>
  <div class="a" style="left:478px;top:331px;width:66px;height:66px;border-radius:50%;background:radial-gradient(circle,#e2e2e2 0 26%,#fafafa 28% 100%)"></div>
  <svg style="left:503px;top:339px" width="16" height="51" viewBox="0 0 16 51"><path d="M2 0h12a2 2 0 0 1 2 2v29.500l-2.200 2.500 2.200 2.500V49a2 2 0 0 1-2 2H2a2 2 0 0 1-2-2V24l2.200-2.500L0 19V2a2 2 0 0 1 2-2z" fill="#3c4046"/></svg>
  <div class="a" style="left:0;top:0;width:580px;height:1px;background:rgba(40,40,40,.5)"></div>
  <div class="a" style="right:0;top:0;width:1px;height:456px;background:rgba(40,40,40,.65)"></div>
  <!-- captions -->
  <div class="a" style="left:9px;top:431px;width:135px;height:25px;background:#f4f4f4"></div>
  <div class="a" style="left:154px;top:431px;width:135px;height:25px;background:#f4f4f4"></div>
  <div class="a" style="left:300px;top:431px;width:134px;height:25px;background:#f4f4f4"></div>
  <div class="a" style="left:444px;top:431px;width:135px;height:25px;background:#f4f4f4"></div>
  <div class="t" style="left:15px;top:446px;font-size:8.200px;color:#1c1c1c;-webkit-text-stroke:.2px #1c1c1c">Office 2016 for Mac 16.17 中文版</div>
  <div class="t" style="left:159px;top:446px;font-size:8.200px;color:#1c1c1c;-webkit-text-stroke:.2px #1c1c1c">oneSafe for Mac 2.2.5 中文破解版</div>
  <div class="t" style="left:304px;top:446px;font-size:8.200px;color:#1c1c1c;-webkit-text-stroke:.2px #1c1c1c">iTools Pro for Mac 1.7.9.8 iPhone</div>
  <div class="t" style="left:449px;top:446px;font-size:8.200px;color:#1c1c1c;-webkit-text-stroke:.2px #1c1c1c">1Password 7 for Mac v7.1.1 中文</div>
</div>
<!-- status bar (y 626-642) -->
<div class="a" style="left:41px;top:626px;width:1007px;height:17px;background:#4a4a4a"></div>
<div class="a" style="left:41px;top:626px;width:242px;height:17px;background:#535353"></div>
<div class="a" style="left:41px;top:626px;width:60px;height:17px;background:#464646"></div>
<div class="t" style="left:57px;top:629px;font-size:11px;color:#dcdcdc">100%</div>
<div class="t" style="left:138px;top:629px;font-size:11.600px;color:#dcdcdc">文档:3.03M/3.03M</div>
<svg style="left:274px;top:629px" width="6" height="10" viewBox="0 0 6 10"><path d="M1 1l4 4-4 4" class="ico" stroke-width="1.100"/></svg>
<div class="hl" style="left:41px;top:643px;width:1023px;height:2px;background:#383838"></div>
<!-- ================= timeline panel ================= -->
<div class="a" style="left:41px;top:645px;width:1023px;height:28px;background:#424242"></div>
<div class="a" style="left:41px;top:645px;width:52px;height:28px;background:#535353"></div>
<div class="sep" style="left:93px;top:645px;height:27px;background:#383838"></div>
<div class="t" style="left:50px;top:654px;font-size:11px;color:#f0f0f0">时间轴</div>
<svg style="left:1047px;top:654px" width="11" height="8" viewBox="0 0 11 8"><path d="M0 .5h11M0 2.800h11M0 5.100h11M0 7.400h11" stroke="#c4c4c4" stroke-width=".9"/></svg>
<div class="a" style="left:41px;top:673px;width:1023px;height:124px;background:#535353"></div>
<svg style="left:50px;top:687.500px" width="12" height="8.500" viewBox="0 0 12 11" preserveAspectRatio="none"><path d="M1 .5v10" stroke="#dcdcdc" stroke-width="1.600"/><path d="M11.500 .5v10L3.500 5.500z" class="icf"/></svg>
<svg style="left:80px;top:687.500px" width="13" height="8.500" viewBox="0 0 13 11" preserveAspectRatio="none"><path d="M8.500 .5v10L.5 5.500z" class="icf"/><path d="M11.500 .5v10" stroke="#dcdcdc" stroke-width="1.800"/></svg>
<svg style="left:113.500px;top:686.500px" width="10" height="10.500" viewBox="0 0 11 13" preserveAspectRatio="none"><path d="M.5 .5l10 6-10 6z" class="icf"/></svg>
<svg style="left:143px;top:687.500px" width="13" height="8.500" viewBox="0 0 13 11" preserveAspectRatio="none"><path d="M1.500 .5v10" stroke="#dcdcdc" stroke-width="1.800"/><path d="M4.500 .5v10l8-5z" class="icf"/></svg>
<div class="dk" style="left:166px;top:679px;width:28px;height:26px;background:#363636"></div>
<svg style="left:173px;top:685px" width="15" height="13" viewBox="0 0 15 13"><path d="M.5 4.300h3L7.500 .8v11.400L3.500 8.700h-3z" class="icf"/><path d="M9.500 4.200c1.100 1.300 1.100 3.300 0 4.600M11.500 2.200c2.200 2.500 2.200 6.100 0 8.600" class="ico" stroke-width="1.200"/></svg>
<svg style="left:203px;top:684px" width="15" height="15" viewBox="0 0 15 15"><circle cx="7" cy="7" r="3.600" fill="none" stroke="#dcdcdc" stroke-width="2.200"/><path d="M7 .8v2M7 11.200v2M.8 7h2M11.200 7h2M2.600 2.600l1.400 1.400M10 10l1.400 1.400M2.600 11.400L4 10M10 4l1.400-1.400" stroke="#dcdcdc" stroke-width="1.700"/><path d="M11.500 12.500h3.500l-1.750 2.300z" class="icf"/></svg>
<div class="sep" style="left:230px;top:678px;height:28px"></div>
<svg style="left:240px;top:683px" width="17" height="15" viewBox="0 0 17 15"><circle cx="3.300" cy="3.300" r="2.300" class="ico" stroke-width="1.400"/><circle cx="3.300" cy="11.700" r="2.300" class="ico" stroke-width="1.400"/><path d="M5.300 4.600L16 11.500M5.300 10.400L16 3.500" class="ico" stroke-width="1.400"/></svg>
<svg style="left:274px;top:685px" width="13" height="13" viewBox="0 0 13 13"><rect x=".6" y=".6" width="11.800" height="11.800" class="ico" stroke-width="1.200" stroke-linejoin="miter"/><path d="M12.400 .6v11.800H.6z" class="icf"/></svg>
<div class="a" style="left:41px;top:711px;width:264px;height:41px;background:#6b6b6b;border-top:1px solid #3f3f3f;border-bottom:1px solid #3f3f3f"></div>
<svg style="left:50px;top:726px" width="6" height="11" viewBox="0 0 6 11"><path d="M1 1l4 4.500-4 4.500" class="ico" stroke-width="1.100"/></svg>
<div class="t" style="left:66px;top:727px;font-size:11px;font-weight:bold;color:#f4f4f4">图层 1</div>
<svg style="left:277px;top:725px" width="10" height="13" viewBox="0 0 10 13"><path d="M.5 .5h9v12h-9zM2.700 .5v12M7.300 .5v12M.5 3.500h2.200M.5 6.500h2.200M.5 9.500h2.200M7.300 3.500h2.200M7.300 6.500h2.200M7.300 9.500h2.200M2.700 6.500h4.600" class="ico" stroke-width="1" stroke-linejoin="miter"/></svg>
<div class="a" style="left:288px;top:726px;width:11px;height:11px;background:#5c5c5c"></div>
<svg style="left:290.7px;top:729.4px" width="6.600" height="4.200" viewBox="0 0 8 5"><path d="M.7.700L4 4l3.300-3.300" class="ico" stroke-width="1.100"/></svg>
<div class="t" style="left:50px;top:762px;font-size:11px;color:#f0f0f0">音轨</div>
<svg style="left:251px;top:761px" width="14" height="12" viewBox="0 0 15 13"><path d="M.5 4.300h3L7.500 .8v11.400L3.500 8.700h-3z" class="icf"/><path d="M9.500 4.200c1.100 1.300 1.100 3.300 0 4.600M11.500 2.200c2.200 2.500 2.200 6.100 0 8.600" class="ico" stroke-width="1.200"/></svg>
<svg style="left:274px;top:760px" width="12" height="13" viewBox="0 0 12 13"><path d="M4 10.300V1.800l7-1.300v8.300" class="ico" stroke-width="1.400" stroke-linejoin="miter"/><path d="M4 2.700l7-1.300" stroke="#dcdcdc" stroke-width="2"/><ellipse cx="2.400" cy="10.500" rx="2.200" ry="1.700" class="icf"/><ellipse cx="9.400" cy="9" rx="2.200" ry="1.700" class="icf"/></svg>
<svg style="left:290.7px;top:765.4px" width="6.600" height="4.200" viewBox="0 0 8 5"><path d="M.7.700L4 4l3.300-3.300" class="ico" stroke-width="1.100"/></svg>
<div class="hl" style="left:41px;top:776px;width:1007px;background:#444"></div>
<div class="a" style="left:464px;top:777px;width:584px;height:20px;background:#4a4a4a"></div>
<svg style="left:47px;top:783px" width="18" height="6" viewBox="0 0 18 6"><rect x=".5" y=".5" width="4.500" height="5" class="ico" stroke-width="1" stroke-linejoin="miter"/><rect x="6.500" y=".5" width="4.500" height="5" class="ico" stroke-width="1" stroke-linejoin="miter"/><rect x="12.500" y=".5" width="4.500" height="5" class="ico" stroke-width="1" stroke-linejoin="miter"/></svg>
<svg style="left:78px;top:780px" width="14" height="12" viewBox="0 0 14 12"><path d="M8 0l6 5-6 5V7C4.500 7 2 8.500 .5 11.500 1 6.500 3.500 3.300 8 3z" class="icf"/></svg>
<div class="t" style="left:129px;top:780px;font-size:13px;font-weight:bold;color:#f4f4f4">0:00:00:04</div>
<div class="t" style="left:234px;top:780px;font-size:12px;color:#e8e8e8">(30.00 fps)</div>
<div class="sep" style="left:305px;top:673px;height:124px;background:#3f3f3f"></div>
<div class="hl" style="left:306px;top:693px;width:715px;background:#3f3f3f"></div>
<div class="a" style="left:313.0px;top:686px;width:1px;height:15px;background:#3f3f3f"></div>
<div class="t" style="left:284.2px;top:674px;width:60px;text-align:center;font-size:12px;color:#fafafa;-webkit-text-stroke:.25px #fafafa">00</div>
<div class="a" style="left:383.0px;top:689px;width:1px;height:8px;background:#3f3f3f"></div>
<div class="t" style="left:354.2px;top:674px;width:60px;text-align:center;font-size:12px;color:#fafafa;-webkit-text-stroke:.25px #fafafa">15f</div>
<div class="a" style="left:453.0px;top:686px;width:1px;height:15px;background:#3f3f3f"></div>
<div class="t" style="left:424.2px;top:674px;width:60px;text-align:center;font-size:12px;color:#fafafa;-webkit-text-stroke:.25px #fafafa">01:00f</div>
<div class="a" style="left:523.0px;top:689px;width:1px;height:8px;background:#3f3f3f"></div>
<div class="t" style="left:494.2px;top:674px;width:60px;text-align:center;font-size:12px;color:#fafafa;-webkit-text-stroke:.25px #fafafa">15f</div>
<div class="a" style="left:593.0px;top:686px;width:1px;height:15px;background:#3f3f3f"></div>
<div class="t" style="left:564.2px;top:674px;width:60px;text-align:center;font-size:12px;color:#fafafa;-webkit-text-stroke:.25px #fafafa">02:00f</div>
<div class="a" style="left:663.0px;top:689px;width:1px;height:8px;background:#3f3f3f"></div>
<div class="t" style="left:634.2px;top:674px;width:60px;text-align:center;font-size:12px;color:#fafafa;-webkit-text-stroke:.25px #fafafa">15f</div>
<div class="a" style="left:733.0px;top:686px;width:1px;height:15px;background:#3f3f3f"></div>
<div class="t" style="left:704.2px;top:674px;width:60px;text-align:center;font-size:12px;color:#fafafa;-webkit-text-stroke:.25px #fafafa">03:00f</div>
<div class="a" style="left:803.0px;top:689px;width:1px;height:8px;background:#3f3f3f"></div>
<div class="t" style="left:774.2px;top:674px;width:60px;text-align:center;font-size:12px;color:#fafafa;-webkit-text-stroke:.25px #fafafa">15f</div>
<div class="a" style="left:873.0px;top:686px;width:1px;height:15px;background:#3f3f3f"></div>
<div class="t" style="left:844.2px;top:674px;width:60px;text-align:center;font-size:12px;color:#fafafa;-webkit-text-stroke:.25px #fafafa">04:00f</div>
<div class="a" style="left:943.0px;top:689px;width:1px;height:8px;background:#3f3f3f"></div>
<div class="t" style="left:914.2px;top:674px;width:60px;text-align:center;font-size:12px;color:#fafafa;-webkit-text-stroke:.25px #fafafa">15f</div>
<div class="a" style="left:1013.0px;top:686px;width:1px;height:15px;background:#3f3f3f"></div>
<div class="t" style="left:996px;top:674px;width:24px;overflow:hidden;font-size:12px;color:#fafafa;-webkit-text-stroke:.25px #fafafa">05:00f</div>
<div class="sep" style="left:1020px;top:673px;height:104px;background:#474747"></div>
<svg style="left:308px;top:693px" width="8" height="17" viewBox="0 0 8 17"><rect x=".6" y=".6" width="6.800" height="15.800" rx="1.800" fill="#535353" stroke="#e0e0e0" stroke-width="1.200"/><path d="M2.900 5.500v5.500M5.100 5.500v5.500" stroke="#e0e0e0" stroke-width=".9"/></svg>
<svg style="left:1012px;top:693px" width="8" height="17" viewBox="0 0 8 17"><rect x=".6" y=".6" width="6.800" height="15.800" rx="1.800" fill="#535353" stroke="#e0e0e0" stroke-width="1.200"/><path d="M2.900 5.500v5.500M5.100 5.500v5.500" stroke="#e0e0e0" stroke-width=".9"/></svg>
<div class="a" style="left:315px;top:708px;width:22px;height:2px;background:#5f9c90"></div>
<div class="a" style="left:338px;top:708px;width:9px;height:2px;background:#5f9c90"></div>
<div class="hl" style="left:306px;top:711px;width:742px;background:#444"></div>
<div class="hl" style="left:306px;top:752px;width:742px;background:#444"></div>
<div class="a" style="left:314px;top:753px;width:24px;height:23px;background:#5a5a5a"></div>
<div class="a" style="left:315px;top:712px;width:697px;height:39px;background:#7a62aa;border:1.500px solid #ece6f6;border-radius:4px;box-shadow:0 0 0 1px #2c2c2c"></div>
<div class="a" style="left:317px;top:714px;width:45px;height:35px;background:#fff;overflow:hidden"><div class="a" style="left:0;top:2px;width:45px;height:2px;background:#8fc3ae"></div><div class="a" style="left:2px;top:6px;width:8px;height:12px;background:repeating-linear-gradient(#ddd 0 1px,#fff 1px 2px)"></div><div class="a" style="left:34px;top:6px;width:9px;height:12px;background:repeating-linear-gradient(#ccc 0 1px,#fff 1px 2px)"></div><div class="a" style="left:14px;top:5px;width:19px;height:13px;background:#0e2a3a"></div><div class="t" style="left:16px;top:7px;font-size:10px;color:#5cc3f0">Ps</div><div class="a" style="left:1px;top:22px;width:9px;height:10px;background:linear-gradient(90deg,#2f7d4a 0 30%,#2a5db0 30% 65%,#c8442c 65%)"></div><div class="a" style="left:13px;top:23px;width:8px;height:8px;border-radius:50%;border:1.500px solid #a8a0e0"></div><div class="a" style="left:24px;top:22px;width:10px;height:10px;border-radius:2px;background:#3f86e0;border:1px solid #e8b25a"></div><div class="a" style="left:37px;top:23px;width:8px;height:8px;border-radius:50%;border:1.500px solid #4a90e2"></div></div>
<svg style="left:367px;top:715px" width="6" height="11" viewBox="0 0 6 11"><path d="M1 1l4 4.500-4 4.500" class="ico" stroke-width="1.100" stroke="#f0f0f0"/></svg>
<div class="t" style="left:379px;top:715px;font-size:11px;font-weight:bold;color:#fff">图层 1</div>
<svg style="left:999px;top:716px" width="9" height="10" viewBox="0 0 9 10"><rect width="9" height="10" rx="1" fill="#b2b0b6"/><path d="M2.300 1.800v6.400L7.500 5z" fill="#6f58a4"/></svg>
<div class="a" style="left:332px;top:690px;width:1px;height:86px;background:#e0402a"></div>
<svg style="left:326px;top:678px" width="13" height="14" viewBox="0 0 13 14"><path d="M2 .6h9c.800 0 1.400.6 1.400 1.400v6L6.500 13.300.6 8V2C.6 1.200 1.200 .6 2 .6z" fill="#3c7adb" stroke="#e8e8f0" stroke-width="1"/><circle cx="4" cy="5" r=".8" fill="#fff"/><circle cx="6.500" cy="5" r=".8" fill="#fff"/><circle cx="9" cy="5" r=".8" fill="#fff"/></svg>
<svg style="left:1028px;top:726px" width="11" height="11" viewBox="0 0 11 11"><path d="M5.500 .5v10M.5 5.500h10" stroke="#f0f0f0" stroke-width="1.900"/></svg>
<svg style="left:1028px;top:760px" width="11" height="11" viewBox="0 0 11 11"><path d="M5.500 .5v10M.5 5.500h10" stroke="#f0f0f0" stroke-width="1.900"/></svg>
<div class="a" style="left:1048px;top:711px;width:16px;height:86px;background:#4a4a4a"></div>
<div class="a" style="left:1051px;top:713px;width:10px;height:56px;background:#6b6b6b;border-radius:5px"></div>
<div class="a" style="left:1032px;top:779px;width:16px;height:16px;background:#6b6b6b;border-radius:50%"></div>
<svg style="left:316px;top:784px" width="10" height="6" viewBox="0 0 10 6"><path d="M0 6l3-4 2 2 1.500-1.500L10 6z" class="icf"/></svg>
<div class="a" style="left:346px;top:781px;width:78px;height:3px;background:#6e6e6e"></div>
<svg style="left:366px;top:783px" width="12" height="14" viewBox="0 0 12 14"><path d="M6 .5c.500 0 .900.200 1.200.600L11.500 7v7H.5V7L4.800 1.100C5.100.7 5.500.5 6 .5z" fill="#f4f4f4" stroke="#333" stroke-width=".8"/></svg>
<svg style="left:441px;top:781px" width="17" height="8" viewBox="0 0 17 8"><path d="M0 8l5.500-7.500 3 4 2.500-3L17 8z" class="icf"/></svg>
<!-- ================= right dock ================= -->
<div class="a" style="left:1066px;top:82px;width:402px;height:715px;background:#535353"></div>
<div class="a" style="left:1066px;top:82px;width:402px;height:12px;background:#424242"></div>
<svg style="left:1090px;top:85px" width="8" height="6" viewBox="0 0 8 6"><path d="M3.100 .5L.5 3l2.600 2.500M7.100 .5L4.500 3l2.600 2.500" fill="none" stroke="#bcbcbc" stroke-width=".85"/></svg>
<svg style="left:1377px;top:85px" width="8" height="6" viewBox="0 0 8 6"><path d="M.5.500l2.600 2.500L.5 5.500M4.500 .5l2.600 2.500-2.600 2.500" fill="none" stroke="#bcbcbc" stroke-width=".85"/></svg>
<svg style="left:1454px;top:85px" width="8" height="6" viewBox="0 0 8 6"><path d="M3.100 .5L.5 3l2.600 2.500M7.100 .5L4.500 3l2.600 2.500" fill="none" stroke="#bcbcbc" stroke-width=".85"/></svg>
<div class="a" style="left:1105px;top:94px;width:2px;height:703px;background:#3a3a3a"></div>
<div class="a" style="left:1392px;top:94px;width:2px;height:703px;background:#3a3a3a"></div>
<div class="a" style="left:1076px;top:97px;width:20px;height:4px;background:repeating-linear-gradient(90deg,#3c3c3c 0 1px,transparent 1px 2px)"></div>
<svg style="left:1079px;top:109px" width="18" height="18" viewBox="0 0 18 18"><rect x=".6" y=".6" width="4.800" height="4.200" class="ico" stroke-width="1.100" stroke-linejoin="miter"/><rect x=".6" y="6.800" width="4.800" height="4.200" class="ico" stroke-width="1.100" stroke-linejoin="miter"/><rect y="12.400" width="6" height="5" class="icf"/><path d="M9.200 16C13 14.500 15.200 11 15 7.500c-.1-1.700-.7-3-1.500-4L15.300 2 9.300.8 8.700 7l2.100-1.500C12 7.500 12.300 12 9.200 16z" class="icf"/></svg>
<div class="hl" style="left:1066px;top:134px;width:39px;height:2px;background:#3a3a3a"></div>
<div class="a" style="left:1421px;top:97px;width:20px;height:4px;background:repeating-linear-gradient(90deg,#3c3c3c 0 1px,transparent 1px 2px)"></div>
<svg style="left:1406px;top:108px" width="14" height="19" viewBox="0 0 14 19"><path d="M7 .7C3.500 .7 .7 3.400 .7 6.700c0 2 1 3.400 2 4.600.8 1 1.300 1.700 1.500 2.500h5.600c.2-.8.700-1.500 1.500-2.500 1-1.200 2-2.600 2-4.600C13.300 3.400 10.500 .7 7 .7z" class="ico" stroke-width="1.300"/><path d="M4.200 13.200h5.600v3c0 1.300-1.200 2.600-2.800 2.600s-2.800-1.300-2.800-2.600z" class="icf"/></svg>
<div class="hl" style="left:1394px;top:134px;width:74px;height:2px;background:#3a3a3a"></div>
<div class="a" style="left:1421px;top:138px;width:20px;height:4px;background:repeating-linear-gradient(90deg,#3c3c3c 0 1px,transparent 1px 2px)"></div>
<svg style="left:1402px;top:150px" width="22" height="17" viewBox="0 0 22 17"><path d="M6.300 16C3 16 .7 13.600 .7 10.600c0-2.800 2-5 4.800-5.300C6.800 2.600 9.500 .8 12.600 .8c4.800 0 8.700 3.300 8.700 7.600 0 4.200-3.500 7.600-8.200 7.600z" fill="#9a9a9a" stroke="#cdcdcd" stroke-width="1.400"/><path d="M5.500 11c-.8-2.300 1.500-4.300 3.700-3.300 1.200.6 2.200 1.800 3.400 3 1.500 1.500 3.600 1.300 4.500-.4 1-2-.4-4.300-2.700-4.300-1 0-1.800.4-2.400 1M9 12.600c-.9.500-2.500.2-3.300-1.200" fill="none" stroke="#d6d6d6" stroke-width="1.500" stroke-linecap="round"/></svg>
<div class="hl" style="left:1394px;top:175px;width:74px;height:2px;background:#3a3a3a"></div>
<div class="a" style="left:1107px;top:94px;width:285px;height:28px;background:#424242"></div>
<div class="a" style="left:1107px;top:94px;width:41px;height:27px;background:#464646"></div>
<div class="sep" style="left:1147px;top:94px;height:27px;background:#383838"></div>
<div class="pt" style="left:1115px;top:103px">颜色</div>
<div class="a" style="left:1148px;top:94px;width:40px;height:28px;background:#535353"></div>
<div class="sep" style="left:1187px;top:94px;height:27px;background:#383838"></div>
<div class="pt on" style="left:1156px;top:103px">色板</div>
<svg style="left:1374px;top:104px" width="11" height="8" viewBox="0 0 11 8"><path d="M0 .5h11M0 2.800h11M0 5.100h11M0 7.400h11" stroke="#c4c4c4" stroke-width=".9"/></svg>
<div class="a" style="left:1111px;top:130px;width:274px;height:19px;border:1px solid #464646;background:#535353"></div>
<div class="a" style="left:1113px;top:132px;width:15px;height:15px;background:#000"></div>
<div class="a" style="left:1130px;top:132px;width:15px;height:15px;background:#fff"></div>
<div class="a" style="left:1107px;top:160px;width:276px;height:108px;background:#4a4a4a"></div>
<div class="a" style="left:1108px;top:162px;width:16px;height:16px;background:#e93423"></div>
<div class="a" style="left:1126px;top:162px;width:16px;height:16px;background:#ffff54"></div>
<div class="a" style="left:1144px;top:162px;width:16px;height:16px;background:#75fb4c"></div>
<div class="a" style="left:1162px;top:162px;width:16px;height:16px;background:#75fbfd"></div>
<div class="a" style="left:1180px;top:162px;width:16px;height:16px;background:#001ff5"></div>
<div class="a" style="left:1198px;top:162px;width:16px;height:16px;background:#ea3ff7"></div>
<div class="a" style="left:1216px;top:162px;width:16px;height:16px;background:#ffffff"></div>
<div class="a" style="left:1234px;top:162px;width:16px;height:16px;background:#ececec"></div>
<div class="a" style="left:1252px;top:162px;width:16px;height:16px;background:#e3e3e3"></div>
<div class="a" style="left:1270px;top:162px;width:16px;height:16px;background:#dadada"></div>
<div class="a" style="left:1288px;top:162px;width:16px;height:16px;background:#d0d0d0"></div>
<div class="a" style="left:1306px;top:162px;width:16px;height:16px;background:#c8c8c8"></div>
<div class="a" style="left:1324px;top:162px;width:16px;height:16px;background:#bebebe"></div>
<div class="a" style="left:1342px;top:162px;width:16px;height:16px;background:#b4b4b4"></div>
<div class="a" style="left:1108px;top:180px;width:16px;height:16px;background:#aaaaaa"></div>
<div class="a" style="left:1126px;top:180px;width:16px;height:16px;background:#a0a0a0"></div>
<div class="a" style="left:1144px;top:180px;width:16px;height:16px;background:#d13027"></div>
<div class="a" style="left:1162px;top:180px;width:16px;height:16px;background:#ffef35"></div>
<div class="a" style="left:1180px;top:180px;width:16px;height:16px;background:#00924e"></div>
<div class="a" style="left:1198px;top:180px;width:16px;height:16px;background:#009ee3"></div>
<div class="a" style="left:1216px;top:180px;width:16px;height:16px;background:#1f2480"></div>
<div class="a" style="left:1234px;top:180px;width:16px;height:16px;background:#d0207c"></div>
<div class="a" style="left:1252px;top:180px;width:16px;height:16px;background:#949494"></div>
<div class="a" style="left:1270px;top:180px;width:16px;height:16px;background:#888888"></div>
<div class="a" style="left:1288px;top:180px;width:16px;height:16px;background:#7c7c7c"></div>
<div class="a" style="left:1306px;top:180px;width:16px;height:16px;background:#707070"></div>
<div class="a" style="left:1324px;top:180px;width:16px;height:16px;background:#646464"></div>
<div class="a" style="left:1342px;top:180px;width:16px;height:16px;background:#545454"></div>
<div class="a" style="left:1108px;top:198px;width:16px;height:16px;background:#444444"></div>
<div class="a" style="left:1126px;top:198px;width:16px;height:16px;background:#313131"></div>
<div class="a" style="left:1144px;top:198px;width:16px;height:16px;background:#1b1b1b"></div>
<div class="a" style="left:1162px;top:198px;width:16px;height:16px;background:#000000"></div>
<div class="a" style="left:1180px;top:198px;width:16px;height:16px;background:#e8a283"></div>
<div class="a" style="left:1198px;top:198px;width:16px;height:16px;background:#eeb88b"></div>
<div class="a" style="left:1216px;top:198px;width:16px;height:16px;background:#f4cf93"></div>
<div class="a" style="left:1234px;top:198px;width:16px;height:16px;background:#fef5a4"></div>
<div class="a" style="left:1252px;top:198px;width:16px;height:16px;background:#d0e1a3"></div>
<div class="a" style="left:1270px;top:198px;width:16px;height:16px;background:#b2d6a1"></div>
<div class="a" style="left:1288px;top:198px;width:16px;height:16px;background:#99c89f"></div>
<div class="a" style="left:1306px;top:198px;width:16px;height:16px;background:#98cbc6"></div>
<div class="a" style="left:1324px;top:198px;width:16px;height:16px;background:#92ccee"></div>
<div class="a" style="left:1342px;top:198px;width:16px;height:16px;background:#8eaada"></div>
<div class="a" style="left:1108px;top:216px;width:16px;height:16px;background:#9098cb"></div>
<div class="a" style="left:1126px;top:216px;width:16px;height:16px;background:#8f87bd"></div>
<div class="a" style="left:1144px;top:216px;width:16px;height:16px;background:#a78fc0"></div>
<div class="a" style="left:1162px;top:216px;width:16px;height:16px;background:#bc95c0"></div>
<div class="a" style="left:1180px;top:216px;width:16px;height:16px;background:#e9a5c6"></div>
<div class="a" style="left:1198px;top:216px;width:16px;height:16px;background:#e8a3a2"></div>
<div class="a" style="left:1216px;top:216px;width:16px;height:16px;background:#de744d"></div>
<div class="a" style="left:1234px;top:216px;width:16px;height:16px;background:#e6965a"></div>
<div class="a" style="left:1252px;top:216px;width:16px;height:16px;background:#efbb68"></div>
<div class="a" style="left:1270px;top:216px;width:16px;height:16px;background:#fff279"></div>
<div class="a" style="left:1288px;top:216px;width:16px;height:16px;background:#bdd578"></div>
<div class="a" style="left:1306px;top:216px;width:16px;height:16px;background:#8ec37a"></div>
<div class="a" style="left:1324px;top:216px;width:16px;height:16px;background:#5eae7b"></div>
<div class="a" style="left:1342px;top:216px;width:16px;height:16px;background:#58b1b3"></div>
<div class="a" style="left:1108px;top:234px;width:16px;height:16px;background:#45b3e7"></div>
<div class="a" style="left:1126px;top:234px;width:16px;height:16px;background:#568bc7"></div>
<div class="a" style="left:1144px;top:234px;width:16px;height:16px;background:#5b70b3"></div>
<div class="a" style="left:1162px;top:234px;width:16px;height:16px;background:#5c559e"></div>
<div class="a" style="left:1180px;top:234px;width:16px;height:16px;background:#855ca1"></div>
<div class="a" style="left:1198px;top:234px;width:16px;height:16px;background:#a466a1"></div>
<div class="a" style="left:1216px;top:234px;width:16px;height:16px;background:#e073a2"></div>
<div class="a" style="left:1234px;top:234px;width:16px;height:16px;background:#de737a"></div>
<div class="a" style="left:1252px;top:234px;width:16px;height:16px;background:#d33127"></div>
<div class="a" style="left:1270px;top:234px;width:16px;height:16px;background:#dd6c28"></div>
<div class="a" style="left:1288px;top:234px;width:16px;height:16px;background:#e89e31"></div>
<div class="a" style="left:1306px;top:234px;width:16px;height:16px;background:#fff036"></div>
<div class="a" style="left:1324px;top:234px;width:16px;height:16px;background:#9cc345"></div>
<div class="a" style="left:1342px;top:234px;width:16px;height:16px;background:#55a84b"></div>
<div class="a" style="left:1108px;top:252px;width:16px;height:15px;background:#00924e"></div>
<div class="a" style="left:1126px;top:252px;width:16px;height:15px;background:#00999a"></div>
<div class="a" style="left:1144px;top:252px;width:16px;height:15px;background:#009ee3"></div>
<div class="a" style="left:1162px;top:252px;width:16px;height:15px;background:#0067b2"></div>
<div class="a" style="left:1180px;top:252px;width:16px;height:15px;background:#034999"></div>
<div class="a" style="left:1198px;top:252px;width:16px;height:15px;background:#1f2480"></div>
<div class="a" style="left:1216px;top:252px;width:16px;height:15px;background:#58247f"></div>
<div class="a" style="left:1234px;top:252px;width:16px;height:15px;background:#87217e"></div>
<div class="a" style="left:1252px;top:252px;width:16px;height:15px;background:#d4207c"></div>
<div class="a" style="left:1270px;top:252px;width:16px;height:15px;background:#d32d50"></div>
<div class="a" style="left:1288px;top:252px;width:16px;height:15px;background:#951b13"></div>
<div class="a" style="left:1306px;top:252px;width:16px;height:15px;background:#9c4c16"></div>
<div class="a" style="left:1324px;top:252px;width:16px;height:15px;background:#a6711a"></div>
<div class="a" style="left:1342px;top:252px;width:16px;height:15px;background:#bba922"></div>
<div class="a" style="left:1370px;top:163px;width:10px;height:67px;background:#6b6b6b;border-radius:5px"></div>
<svg style="left:1313px;top:274px" width="12" height="12" viewBox="0 0 12 12"><path d="M.7.700h10.600v10.600H5.500L.7 6.500z" class="ico" stroke-width="1.300" stroke-linejoin="miter"/><path d="M.7 6.500h4.800v4.800z" class="icf"/></svg>
<svg style="left:1342px;top:273px" width="12" height="14" viewBox="0 0 12 14"><g fill="none" stroke="#8c8c8c" stroke-width="1.100"><path d="M.5 2.800h11M4 2.800V1h4v1.800M1.700 2.800l.6 10.500h7.400l.6-10.500M4.200 5v6.300M6 5v6.300M7.800 5v6.300"/></g></svg>
<div class="hl" style="left:1107px;top:292px;width:285px;height:3px;background:#3a3a3a"></div>
<div class="a" style="left:1107px;top:295px;width:285px;height:28px;background:#424242"></div>
<div class="a" style="left:1107px;top:295px;width:41px;height:28px;background:#535353"></div>
<div class="sep" style="left:1147px;top:295px;height:27px;background:#383838"></div>
<div class="pt on" style="left:1115px;top:304px">属性</div>
<div class="a" style="left:1148px;top:295px;width:40px;height:27px;background:#464646"></div>
<div class="sep" style="left:1187px;top:295px;height:27px;background:#383838"></div>
<div class="pt" style="left:1156px;top:304px">调整</div>
<svg style="left:1374px;top:305px" width="11" height="8" viewBox="0 0 11 8"><path d="M0 .5h11M0 2.800h11M0 5.100h11M0 7.400h11" stroke="#c4c4c4" stroke-width=".9"/></svg>
<div class="dk" style="left:1117px;top:328px;width:24px;height:24px;background:#303030;border-color:#2a2a2a"></div>
<svg style="left:1122px;top:334px" width="14" height="12" viewBox="0 0 14 12"><rect x=".6" y=".6" width="12.800" height="10.800" class="ico" stroke-width="1.200" stroke-linejoin="miter"/><path d="M2 10V8.500l1.500-2 1 1.300L6 5l1.500 2.500 1-1L10 8l1-.8 1 1.300V10z" class="icf"/><rect x="9.500" y="2.500" width="2" height="2" class="icf"/></svg>
<div class="t" style="left:1145px;top:336px;font-size:11px;color:#e8e8e8">像素图层属性</div>
<div class="hl" style="left:1107px;top:356px;width:285px;background:#444"></div>
<div class="a" style="left:1376px;top:358px;width:15px;height:157px;background:#4a4a4a"></div>
<div class="t" style="left:1116px;top:373px;font-size:11px;color:#e4e4e4">W:</div>
<div class="fld" style="left:1134px;top:369px;width:67px;height:17px"></div>
<div class="t" style="left:1138px;top:373px;font-size:11px;color:#ececec">40.92 厘米</div>
<div class="dk" style="left:1209px;top:365px;width:25px;height:25px;background:#303030"></div>
<svg style="left:1214px;top:373px" width="15" height="9" viewBox="0 0 15 9"><path d="M6.200 1H4.300C2.300 1 1 2.500 1 4.500S2.300 8 4.300 8h1.900M8.800 1h1.900c2 0 3.300 1.500 3.300 3.500S12.700 8 10.700 8H8.800M4.500 4.500h6" class="ico" stroke-width="1.300"/></svg>
<div class="t" style="left:1242px;top:373px;font-size:11px;color:#e4e4e4">H:</div>
<div class="fld" style="left:1258px;top:369px;width:67px;height:17px"></div>
<div class="t" style="left:1262px;top:373px;font-size:11px;color:#ececec">32.17 厘米</div>
<div class="t" style="left:1118px;top:404px;font-size:11px;color:#e4e4e4">X:</div>
<div class="fld" style="left:1134px;top:400px;width:67px;height:17px"></div>
<div class="t" style="left:1138px;top:404px;font-size:11px;color:#ececec">0 厘米</div>
<div class="t" style="left:1242px;top:404px;font-size:11px;color:#e4e4e4">Y:</div>
<div class="fld" style="left:1257px;top:400px;width:67px;height:17px"></div>
<div class="t" style="left:1261px;top:404px;font-size:11px;color:#ececec">0 厘米</div>
<div class="hl" style="left:1107px;top:540px;width:285px;height:3px;background:#3a3a3a"></div>
<div class="a" style="left:1107px;top:543px;width:285px;height:28px;background:#424242"></div>
<div class="a" style="left:1107px;top:543px;width:41px;height:28px;background:#535353"></div>
<div class="sep" style="left:1147px;top:543px;height:27px;background:#383838"></div>
<div class="pt on" style="left:1115px;top:552px">图层</div>
<div class="a" style="left:1148px;top:543px;width:40px;height:27px;background:#464646"></div>
<div class="sep" style="left:1187px;top:543px;height:27px;background:#383838"></div>
<div class="pt" style="left:1156px;top:552px">通道</div>
<div class="a" style="left:1188px;top:543px;width:40px;height:27px;background:#464646"></div>
<div class="sep" style="left:1227px;top:543px;height:27px;background:#383838"></div>
<div class="pt" style="left:1196px;top:552px">路径</div>
<svg style="left:1374px;top:553px" width="11" height="8" viewBox="0 0 11 8"><path d="M0 .5h11M0 2.800h11M0 5.100h11M0 7.400h11" stroke="#c4c4c4" stroke-width=".9"/></svg>
<div class="fld" style="left:1111px;top:579px;width:75px;height:21px;border-color:#626262;border-radius:3px"></div>
<svg style="left:1119px;top:584px" width="11" height="11" viewBox="0 0 11 11"><circle cx="4.300" cy="4.300" r="3.400" class="ico" stroke-width="1.300"/><path d="M7 7l3.300 3.300" class="ico" stroke-width="1.600"/></svg>
<div class="t" style="left:1132px;top:584px;font-size:11px;color:#f0f0f0">类型</div>
<svg style="left:1174.7px;top:588.4px" width="6.600" height="4.200" viewBox="0 0 8 5"><path d="M.7.700L4 4l3.300-3.300" class="ico" stroke-width="1.100"/></svg>
<svg style="left:1200px;top:584px" width="13" height="11" viewBox="0 0 13 11"><rect x=".6" y=".6" width="11.800" height="9.800" class="ico" stroke-width="1.200" stroke-linejoin="miter"/><path d="M2.500 8.500l2.500-3.500 2 2.500 1.200-1.200 2 2.200z" class="icf"/></svg>
<svg style="left:1225px;top:584px" width="11" height="11" viewBox="0 0 12 12"><circle cx="6" cy="6" r="5.200" class="ico" stroke-width="1.200"/><path d="M9.700 2.300A5.200 5.200 0 0 0 2.300 9.700z" class="icf"/></svg>
<svg style="left:1249.500px;top:584px" width="10.200" height="10.400" viewBox="0 0 12 12" preserveAspectRatio="none"><path d="M.5.500h11v3.200h-1l-.3-1.800H7V10l1.600.3v1.200H3.400v-1.200L5 10V1.900H1.800l-.3 1.800h-1z" class="icf"/></svg>
<svg style="left:1273px;top:583.500px" width="11.500" height="11.500" viewBox="0 0 14 14"><rect x="2.500" y="2.500" width="9" height="9" class="ico" stroke-width="1.200" stroke-linejoin="miter"/><rect x=".8" y=".8" width="3" height="3" fill="#535353" stroke="#dcdcdc"/><rect x="10.200" y=".8" width="3" height="3" fill="#535353" stroke="#dcdcdc"/><rect x=".8" y="10.200" width="3" height="3" fill="#535353" stroke="#dcdcdc"/><rect x="10.200" y="10.200" width="3" height="3" fill="#535353" stroke="#dcdcdc"/></svg>
<svg style="left:1297px;top:583px" width="12" height="13" viewBox="0 0 12 13"><path d="M4.500 .6h4l3 3v6h-7z" class="ico" stroke-width="1.100" stroke-linejoin="miter"/><path d="M8.500 .6v3h3" class="ico" stroke-width="1"/><rect x=".5" y="5.500" width="6.500" height="7" class="icf"/></svg>
<div class="a" style="left:1323px;top:585px;width:10px;height:15px;border-radius:5px;background:#474747;border:1px solid #3a3a3a"></div>
<div class="a" style="left:1324px;top:581px;width:8px;height:8px;border-radius:50%;background:#dcdcdc"></div>
<div class="hl" style="left:1107px;top:603px;width:285px;background:#444"></div>
<div class="fld" style="left:1111px;top:609px;width:112px;height:19px;border-color:#626262;border-radius:3px"></div>
<div class="t" style="left:1118px;top:613px;font-size:11px;color:#f0f0f0">正常</div>
<svg style="left:1212.7px;top:617.4px" width="6.600" height="4.200" viewBox="0 0 8 5"><path d="M.7.700L4 4l3.300-3.300" class="ico" stroke-width="1.100"/></svg>
<div class="t" style="left:1228px;top:613px;font-size:11px;color:#e8e8e8">不透明度:</div>
<div class="fld" style="left:1278px;top:609px;width:54px;height:19px;border-color:#626262;border-radius:3px"></div>
<div class="a" style="left:1317px;top:610px;width:1px;height:17px;background:#626262"></div>
<div class="t" style="left:1282px;top:613px;font-size:11px;color:#f0f0f0">100%</div>
<svg style="left:1321.7px;top:617.4px" width="6.600" height="4.200" viewBox="0 0 8 5"><path d="M.7.700L4 4l3.300-3.300" class="ico" stroke-width="1.100"/></svg>
<div class="hl" style="left:1107px;top:632px;width:285px;background:#444"></div>
<div class="t" style="left:1112px;top:643px;font-size:11px;color:#e8e8e8">锁定:</div>
<svg style="left:1144px;top:642px" width="12" height="12" viewBox="0 0 12 12"><rect x=".5" y=".5" width="11" height="11" class="ico" stroke-width="1" stroke-linejoin="miter"/><path d="M1 1h3.300v3.300H1zM7.700 1H11v3.300H7.700zM4.300 4.300h3.400v3.400H4.300zM1 7.700h3.300V11H1zM7.700 7.700H11V11H7.700z" class="icf"/></svg>
<svg style="left:1166px;top:640.500px" width="14" height="14" viewBox="0 0 14 14"><path d="M13.600 .2C10.800 1.900 7.900 4.800 6.200 7.800l2 1.600c2.200-2.800 4.400-5.800 5.400-9.200zM5.300 8.700c-1.600.2-2.300 1.200-2.400 2.300-.1 1-.9 1.800-2.300 2.200 2.700 1 6-.1 6.600-2.900z" class="icf"/></svg>
<svg style="left:1186px;top:641px" width="14" height="14" viewBox="0 0 14 14"><path d="M7 1.500v11M1.500 7h11" class="ico" stroke-width="1.200"/><path d="M7 0l2.200 2.800H4.800zM7 14l2.200-2.800H4.800zM0 7l2.800-2.200v4.400zM14 7l-2.800-2.200v4.400z" class="icf"/></svg>
<svg style="left:1209px;top:641px" width="14" height="14" viewBox="0 0 14 14"><path d="M3.500 .5v10h10M.5 3.500h10v10" class="ico" stroke-width="1.100" stroke-linejoin="miter"/><path d="M12 .5h1.500V2M.5 12v1.500H2" class="ico" stroke-width="1"/></svg>
<svg style="left:1233px;top:641px" width="10" height="13" viewBox="0 0 10 13"><path d="M2.500 6V3.500a2.500 2.500 0 0 1 5 0V6" class="ico" stroke-width="1.400"/><rect x=".5" y="5.500" width="9" height="7" rx="1" class="icf"/><circle cx="5" cy="9" r="1.100" fill="#535353"/></svg>
<div class="t" style="left:1251px;top:643px;font-size:11px;color:#e8e8e8">填充:</div>
<div class="fld" style="left:1278px;top:638px;width:54px;height:19px;border-color:#626262;border-radius:3px"></div>
<div class="a" style="left:1317px;top:639px;width:1px;height:17px;background:#626262"></div>
<div class="t" style="left:1282px;top:642px;font-size:11px;color:#f0f0f0">100%</div>
<svg style="left:1321.7px;top:646.4px" width="6.600" height="4.200" viewBox="0 0 8 5"><path d="M.7.700L4 4l3.300-3.300" class="ico" stroke-width="1.100"/></svg>
<div class="a" style="left:1107px;top:664px;width:285px;height:107px;background:#4a4a4a"></div>
<div class="a" style="left:1107px;top:664px;width:269px;height:34px;background:#6b6b6b"></div>
<div class="a" style="left:1107px;top:664px;width:30px;height:34px;background:#565656"></div>
<div class="a" style="left:1107px;top:698px;width:269px;height:73px;background:#4f4f4f"></div>
<svg style="left:1115px;top:676px" width="14" height="10" viewBox="0 0 14 10"><path d="M.5 5C2 2.200 4.300 .7 7 .7S12 2.200 13.500 5C12 7.800 9.700 9.300 7 9.300S2 7.800.5 5z" class="icf"/><circle cx="7" cy="5" r="2.600" fill="#565656"/><circle cx="7" cy="5" r="1.400" class="icf"/></svg>
<div class="a" style="left:1139px;top:666px;width:36px;height:30px;background:#6b6b6b;border:1px solid #fff"></div>
<div class="a" style="left:1148px;top:665px;width:18px;height:32px;background:#6b6b6b"></div>
<div class="a" style="left:1138px;top:674px;width:38px;height:14px;background:#6b6b6b"></div>
<div class="a" style="left:1140px;top:667px;width:34px;height:28px;background:#3a3a3a"></div>
<div class="a" style="left:1141px;top:668px;width:32px;height:26px;background:#fff;overflow:hidden"><div class="a" style="left:0;top:2px;width:32px;height:1px;background:#7fbfa6"></div><div class="a" style="left:1px;top:5px;width:6px;height:8px;background:repeating-linear-gradient(#ddd 0 1px,#fff 1px 2px)"></div><div class="a" style="left:25px;top:5px;width:6px;height:8px;background:repeating-linear-gradient(#ccc 0 1px,#fff 1px 2px)"></div><div class="a" style="left:9px;top:4px;width:14px;height:10px;background:#0e2a3a"></div><div class="t" style="left:11px;top:6px;font-size:8px;color:#5cc3f0">Ps</div><div class="a" style="left:1px;top:16px;width:6px;height:7px;background:linear-gradient(90deg,#2f7d4a 0 30%,#2a5db0 30% 65%,#c8442c 65%)"></div><div class="a" style="left:9px;top:17px;width:6px;height:6px;border-radius:50%;border:1px solid #a8a0e0"></div><div class="a" style="left:17px;top:16px;width:7px;height:7px;border-radius:2px;background:#3f86e0;border:1px solid #e8b25a"></div><div class="a" style="left:26px;top:17px;width:6px;height:6px;border-radius:50%;border:1px solid #4a90e2"></div></div>
<div class="t" style="left:1181px;top:676px;font-size:11px;color:#f4f4f4">图层 1</div>
<div class="hl" style="left:1107px;top:771px;width:285px;background:#3f3f3f"></div>
<svg style="left:1188px;top:779px" width="14" height="8" viewBox="0 0 15 9"><path d="M6.200 1H4.300C2.300 1 1 2.500 1 4.500S2.300 8 4.300 8h1.900M8.800 1h1.900c2 0 3.300 1.500 3.300 3.500S12.700 8 10.700 8H8.800M4.500 4.500h6" fill="none" stroke="#8c8c8c" stroke-width="1.300"/></svg>
<div class="t" style="left:1216px;top:777px;font-size:14px;font-style:italic;font-family:'Liberation Serif',serif;color:#dcdcdc">fx</div>
<svg style="left:1227px;top:788px" width="4" height="3" viewBox="0 0 4 3"><path d="M0 0h4L2 2.500z" class="icf"/></svg>
<svg style="left:1243px;top:778px" width="13" height="10" viewBox="0 0 13 10"><rect width="13" height="10" rx="1" class="icf"/><circle cx="6.500" cy="5" r="2.700" fill="#535353"/></svg>
<svg style="left:1270px;top:777px" width="12" height="12" viewBox="0 0 12 12"><circle cx="6" cy="6" r="5.200" class="ico" stroke-width="1.200"/><path d="M9.700 2.300A5.200 5.200 0 0 0 2.300 9.700z" class="icf"/></svg>
<svg style="left:1282px;top:788px" width="4" height="3" viewBox="0 0 4 3"><path d="M0 0h4L2 2.500z" class="icf"/></svg>
<svg style="left:1297px;top:778px" width="13" height="11" viewBox="0 0 13 11"><path d="M0 1c0-.6.400-1 1-1h3.500l1.200 1.500H12c.6 0 1 .4 1 1V10c0 .6-.4 1-1 1H1c-.6 0-1-.4-1-1z" class="icf"/></svg>
<svg style="left:1324px;top:777px" width="12" height="12" viewBox="0 0 12 12"><path d="M.7.700h10.600v10.600H5.500L.7 6.500z" class="ico" stroke-width="1.300" stroke-linejoin="miter"/><path d="M.7 6.500h4.800v4.800z" class="icf"/></svg>
<svg style="left:1351px;top:776px" width="12" height="14" viewBox="0 0 12 14"><g fill="none" stroke="#8c8c8c" stroke-width="1.100"><path d="M.5 2.800h11M4 2.800V1h4v1.800M1.700 2.800l.6 10.500h7.400l.6-10.500M4.200 5v6.300M6 5v6.300M7.800 5v6.300"/></g></svg>
<!-- ================= File menu ================= -->
<div id="m-file" class="menu" style="left:163px;top:22px;width:249px;height:555px;border-radius:0 0 5px 5px;background:#cdced1;overflow:hidden">
<div class="a" style="left:110px;top:140px;width:200px;height:430px;background:rgba(255,255,255,.8);filter:blur(26px)"></div><div class="a" style="left:150px;top:330px;width:120px;height:180px;background:rgba(226,222,240,.55);filter:blur(30px)"></div>
<div class="mi" style="top:3px"><div class="t" style="left:20px">新建...</div><div class="t" style="left:230px;top:2px;font-size:14px">N</div><svg style="left:215.4px;top:4px" width="11.400" height="10.800"><use href="#k-cmd"/></svg></div>
<div class="mi" style="top:22px"><div class="t" style="left:20px">打开...</div><div class="t" style="left:230px;top:2px;font-size:14px">O</div><svg style="left:215.4px;top:4px" width="11.400" height="10.800"><use href="#k-cmd"/></svg></div>
<div class="mi" style="top:41px"><div class="t" style="left:20px">在 Bridge 中浏览...</div><div class="t" style="left:230px;top:2px;font-size:14px">O</div><svg style="left:215.4px;top:4px" width="11.400" height="10.800"><use href="#k-cmd"/></svg><svg style="left:200.9px;top:4px" width="12.400" height="10.800"><use href="#k-opt"/></svg></div>
<div class="mi" style="top:60px"><div class="t" style="left:20px">打开为智能对象...</div></div>
<div class="mi" style="top:79px"><div class="t" style="left:20px">最近打开文件</div><svg style="right:12px;top:5.200px" width="9" height="9.600"><use href="#k-sub"/></svg></div>
<div class="ms" style="top:104px"></div>
<div class="mi" style="top:110px"><div class="t" style="left:20px">关闭</div><div class="t" style="left:230px;top:2px;font-size:14px">W</div><svg style="left:215.4px;top:4px" width="11.400" height="10.800"><use href="#k-cmd"/></svg></div>
<div class="mi" style="top:129px"><div class="t" style="left:20px">关闭全部</div><div class="t" style="left:230px;top:2px;font-size:14px">W</div><svg style="left:215.4px;top:4px" width="11.400" height="10.800"><use href="#k-cmd"/></svg><svg style="left:200.9px;top:4px" width="12.400" height="10.800"><use href="#k-opt"/></svg></div>
<div class="mi" style="top:148px"><div class="t" style="left:20px">关闭并转到 Bridge...</div><div class="t" style="left:230px;top:2px;font-size:14px">W</div><svg style="left:215.4px;top:4px" width="11.400" height="10.800"><use href="#k-cmd"/></svg><svg style="left:200.9px;top:4px" width="11.400" height="10.800"><use href="#k-shift"/></svg></div>
<div class="mi" style="top:167px"><div class="t" style="left:20px">存储</div><div class="t" style="left:230px;top:2px;font-size:14px">S</div><svg style="left:215.4px;top:4px" width="11.400" height="10.800"><use href="#k-cmd"/></svg></div>
<div class="mi" style="top:186px"><div class="t" style="left:20px">存储为...</div><div class="t" style="left:230px;top:2px;font-size:14px">S</div><svg style="left:215.4px;top:4px" width="11.400" height="10.800"><use href="#k-cmd"/></svg><svg style="left:200.9px;top:4px" width="11.400" height="10.800"><use href="#k-shift"/></svg></div>
<div class="mi" style="top:205px"><div class="t" style="left:20px">恢复</div><div class="t" style="right:3px;top:6px;font-size:11px">F12</div></div>
<div class="ms" style="top:230px"></div>
<div class="a" style="left:0;right:0;top:237px;height:19px;background:linear-gradient(90deg,#3a7bf0,#62a0f6)"></div>
<div class="mi" style="top:236px;color:#fff"><div class="t" style="left:20px">导出</div><svg style="right:12px;top:5.200px" width="9" height="9.600"><use href="#k-sub"/></svg></div>
<div class="mi" style="top:255px"><div class="t" style="left:20px">生成</div><svg style="right:12px;top:5.200px" width="9" height="9.600"><use href="#k-sub"/></svg></div>
<div class="mi" style="top:274px"><div class="t" style="left:20px">共享...</div></div>
<div class="mi" style="top:293px"><div class="t" style="left:20px">在 Behance 上共享...</div></div>
<div class="ms" style="top:318px"></div>
<div class="mi" style="top:324px"><div class="t" style="left:20px">搜索 Adobe Stock...</div></div>
<div class="mi" style="top:343px"><div class="t" style="left:20px">置入嵌入对象...</div></div>
<div class="mi" style="top:362px"><div class="t" style="left:20px">置入链接的智能对象...</div></div>
<div class="mi dis" style="top:381px"><div class="t" style="left:20px">打包...</div></div>
<div class="ms" style="top:406px"></div>
<div class="mi" style="top:412px"><div class="t" style="left:20px">自动</div><svg style="right:12px;top:5.200px" width="9" height="9.600"><use href="#k-sub"/></svg></div>
<div class="mi" style="top:431px"><div class="t" style="left:20px">脚本</div><svg style="right:12px;top:5.200px" width="9" height="9.600"><use href="#k-sub"/></svg></div>
<div class="mi" style="top:450px"><div class="t" style="left:20px">导入</div><svg style="right:12px;top:5.200px" width="9" height="9.600"><use href="#k-sub"/></svg></div>
<div class="ms" style="top:475px"></div>
<div class="mi" style="top:481px"><div class="t" style="left:20px">文件简介...</div><div class="t" style="left:230px;top:2px;font-size:14px">I</div><svg style="left:215.4px;top:4px" width="11.400" height="10.800"><use href="#k-cmd"/></svg><svg style="left:200.9px;top:4px" width="11.400" height="10.800"><use href="#k-shift"/></svg><svg style="left:186.4px;top:4px" width="12.400" height="10.800"><use href="#k-opt"/></svg></div>
<div class="ms" style="top:506px"></div>
<div class="mi" style="top:512px"><div class="t" style="left:20px">打印...</div><div class="t" style="left:230px;top:2px;font-size:14px">P</div><svg style="left:215.4px;top:4px" width="11.400" height="10.800"><use href="#k-cmd"/></svg></div>
<div class="mi" style="top:531px"><div class="t" style="left:20px">打印一份</div><div class="t" style="left:230px;top:2px;font-size:14px">P</div><svg style="left:215.4px;top:4px" width="11.400" height="10.800"><use href="#k-cmd"/></svg><svg style="left:200.9px;top:4px" width="11.400" height="10.800"><use href="#k-shift"/></svg><svg style="left:186.4px;top:4px" width="12.400" height="10.800"><use href="#k-opt"/></svg></div>
</div>
<!-- ================= Export submenu ================= -->
<div id="m-sub" class="menu" style="left:412px;top:255px;width:338px;height:321px;border-radius:5px;background:#c1d0db;overflow:hidden">
<div class="a" style="left:-20px;top:112px;width:400px;height:260px;background:rgba(250,252,255,.74);filter:blur(24px)"></div><div class="a" style="left:290px;top:-20px;width:90px;height:180px;background:rgba(255,255,255,.5);filter:blur(24px)"></div><div class="a" style="left:120px;top:250px;width:160px;height:90px;background:rgba(250,232,214,.32);filter:blur(26px)"></div>
<div class="mi" style="top:3px"><div class="t" style="left:21px">快速导出为 PNG</div></div>
<div class="mi" style="top:22px"><div class="t" style="left:21px">导出为...</div><div class="t" style="left:319px;top:2px;font-size:14px">W</div><svg style="left:304.4px;top:4px" width="11.400" height="10.800"><use href="#k-cmd"/></svg><svg style="left:289.9px;top:4px" width="11.400" height="10.800"><use href="#k-shift"/></svg><svg style="left:275.4px;top:4px" width="12.400" height="10.800"><use href="#k-opt"/></svg></div>
<div class="ms" style="top:47px"></div>
<div class="mi" style="top:53px"><div class="t" style="left:21px">导出首选项...</div></div>
<div class="ms" style="top:78px"></div>
<div class="mi" style="top:84px"><div class="t" style="left:21px">存储为 Web 所用格式（旧版）...</div><div class="t" style="left:319px;top:2px;font-size:14px">S</div><svg style="left:304.4px;top:4px" width="11.400" height="10.800"><use href="#k-cmd"/></svg><svg style="left:289.9px;top:4px" width="11.400" height="10.800"><use href="#k-shift"/></svg><svg style="left:275.4px;top:4px" width="12.400" height="10.800"><use href="#k-opt"/></svg></div>
<div class="ms" style="top:109px"></div>
<div class="mi dis" style="top:115px"><div class="t" style="left:21px">画板至文件...</div></div>
<div class="mi dis" style="top:134px"><div class="t" style="left:21px">将画板导出到 PDF...</div></div>
<div class="mi" style="top:153px"><div class="t" style="left:21px">将图层导出到文件...</div></div>
<div class="mi dis" style="top:172px"><div class="t" style="left:21px">将图层复合导出到 PDF...</div></div>
<div class="mi dis" style="top:191px"><div class="t" style="left:21px">图层复合导出到文件...</div></div>
<div class="mi" style="top:210px"><div class="t" style="left:21px">颜色查找表...</div></div>
<div class="ms" style="top:235px"></div>
<div class="mi dis" style="top:241px"><div class="t" style="left:21px">数据组作为文件...</div></div>
<div class="mi" style="top:260px"><div class="t" style="left:21px">路径到 Illustrator...</div></div>
<div class="mi" style="top:279px"><div class="t" style="left:21px">渲染视频...</div></div>
<div class="mi" style="top:298px"><div class="t" style="left:21px">Zoomify...</div></div>
</div>
<svg style="left:333px;top:272px" width="14" height="20" viewBox="0 0 14 20"><path d="M1.500 1.500v14.200l3.300-3.100 2.300 5.400 2.300-1-2.300-5.300h4.700z" fill="#111" stroke="#fff" stroke-width="1.200" stroke-linejoin="round"/></svg>
</body>
</html>
